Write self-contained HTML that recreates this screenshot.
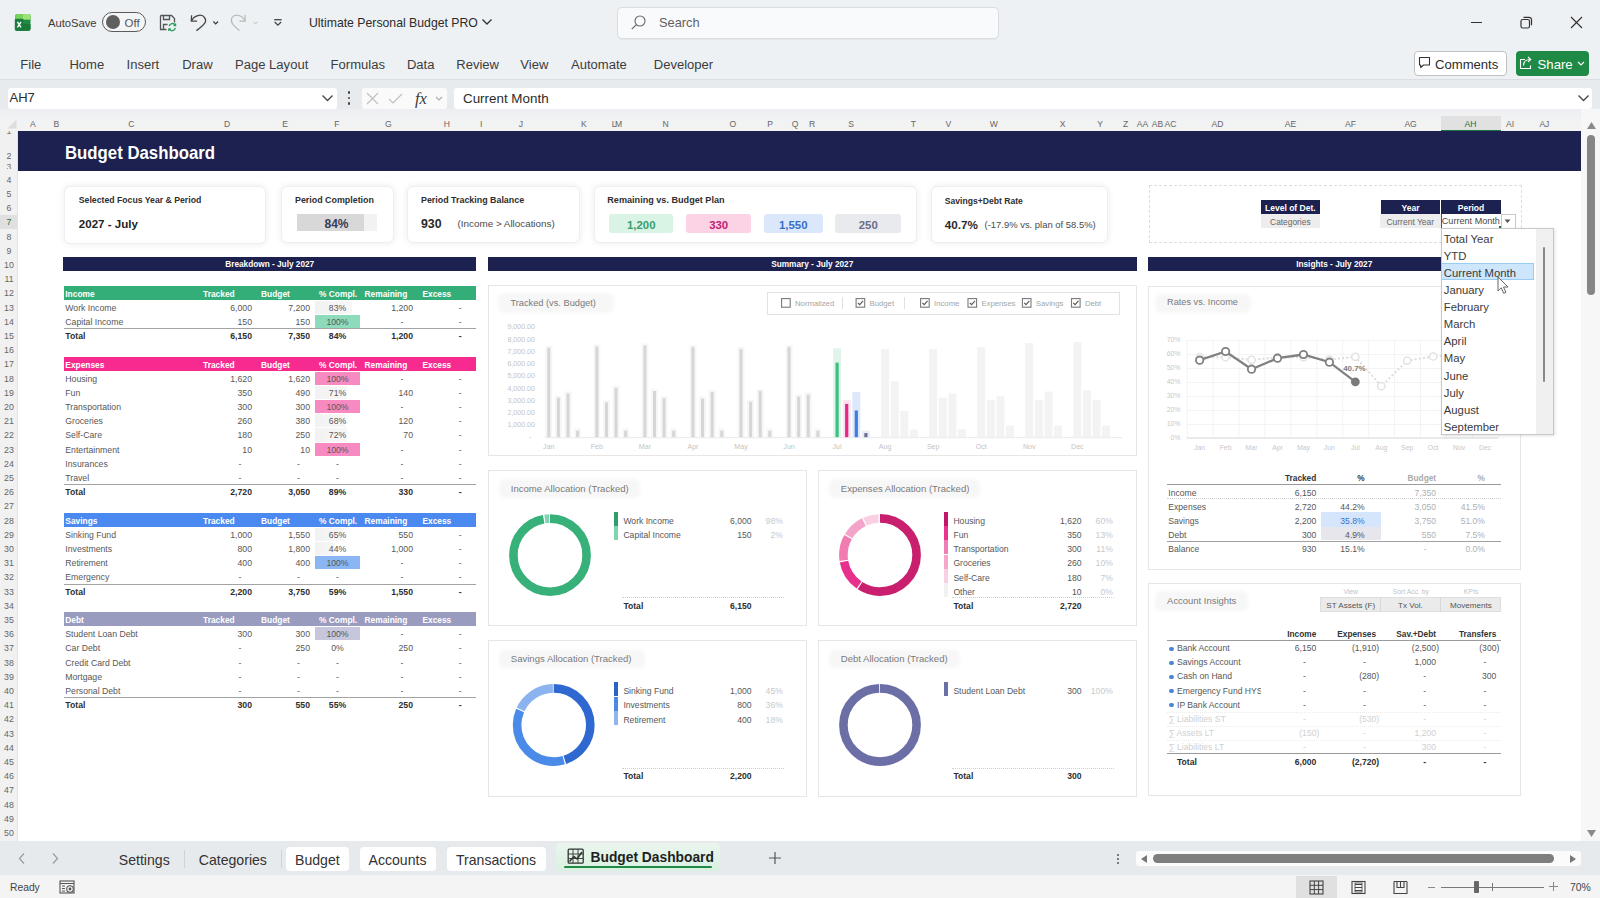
<!DOCTYPE html><html><head><meta charset="utf-8"><style>
html,body{margin:0;padding:0;}
body{width:1600px;height:898px;overflow:hidden;position:relative;background:#eef1f4;font-family:"Liberation Sans",sans-serif;}
.t{position:absolute;white-space:nowrap;}
.r{position:absolute;}
svg{position:absolute;overflow:visible;}
</style></head><body>
<div class="r" style="left:0px;top:0px;width:1600px;height:79px;background:#eef1f4;"></div>
<svg style="left:0;top:0" width="40" height="40" viewBox="0 0 40 40">
<rect x="15.3" y="14" width="15.2" height="16.8" rx="1.8" fill="#1f8a42"/>
<path d="M17.1 14h11.6a1.8 1.8 0 0 1 1.8 1.8v3.6H15.3v-3.6a1.8 1.8 0 0 1 1.8-1.8z" fill="#78d35c"/>
<rect x="23" y="14" width="7.5" height="5.4" rx="1.2" fill="#9de27a"/>
<path d="M15.3 24h15.2v5a1.8 1.8 0 0 1-1.8 1.8H17.1a1.8 1.8 0 0 1-1.8-1.8z" fill="#1a7a3a"/>
<rect x="14.8" y="18.8" width="8.6" height="11.6" rx="1" fill="#197c3d"/>
<path d="M17.4 21.9l3.6 5.4M21 21.9l-3.6 5.4" stroke="#fff" stroke-width="1.4"/>
</svg>
<div class="t" style="left:48px;top:15.82px;font-size:11.2px;line-height:14.56px;color:#3b3b3b;font-weight:normal;">AutoSave</div>
<div class="r" style="left:102px;top:12px;width:41.5px;height:18px;border:1.5px solid #5c5c5c;border-radius:11px;background:#f4f5f7"></div>
<div class="r" style="left:105.5px;top:14.8px;width:14px;height:14px;border-radius:50%;background:#5f5f5f"></div>
<div class="t" style="left:124.5px;top:15.63px;font-size:11.5px;line-height:14.95px;color:#555;font-weight:normal;">Off</div>
<svg style="left:159px;top:14px" width="18" height="18" viewBox="0 0 18 18" fill="none">
<path d="M1.5 1.5h11l3 3v4" stroke="#555" stroke-width="1.3"/>
<path d="M1.5 1.5v14h6" stroke="#555" stroke-width="1.3"/>
<path d="M4.5 1.5v4h6v-4" stroke="#555" stroke-width="1.3"/>
<path d="M4.5 15.5v-5h4" stroke="#555" stroke-width="1.3"/>
<path d="M10.2 12.2a3.3 3.3 0 0 1 6-1.2M16.3 14a3.3 3.3 0 0 1-6 1.2" stroke="#2e9e5b" stroke-width="1.4"/>
<path d="M16.6 9.5v2h-2M9.8 17v-2h2" stroke="#2e9e5b" stroke-width="1.3"/>
</svg>
<svg style="left:0;top:0" width="300" height="40" viewBox="0 0 300 40" fill="none">
<path d="M191.6 15.2L191.3 21.2h5.8" stroke="#454545" stroke-width="1.3" stroke-linejoin="round"/>
<path d="M191.5 21C194 15.5 201.5 13 204.8 17.8C207.2 21.5 204.5 25 196.4 30.6" stroke="#454545" stroke-width="1.3"/>
<path d="M213.4 21.5l2.3 2.3 2.3-2.3" stroke="#333" stroke-width="1.2"/>
<path d="M245 14.8L245.1 21.2h-5.6" stroke="#b8b8b8" stroke-width="1.2" stroke-linejoin="round"/>
<path d="M245 21C242.5 15.5 235 13 232 17.8C229.8 21.5 232.5 25 239.6 30.6" stroke="#b8b8b8" stroke-width="1.2"/>
<path d="M253.5 21.8l2 2 2-2" stroke="#c8c8c8" stroke-width="1.1"/>
</svg>
<svg style="left:0;top:0" width="300" height="40" viewBox="0 0 300 40" fill="none">
<path d="M274.2 19.7h7.5" stroke="#444" stroke-width="1.3"/>
<path d="M274.7 22l3.2 3.2 3.2-3.2" stroke="#444" stroke-width="1.3"/>
</svg>
<div class="t" style="left:309px;top:15.64px;font-size:12.25px;line-height:15.93px;color:#2b2b2b;font-weight:normal;">Ultimate Personal Budget PRO</div>
<svg style="left:481px;top:18px" width="12" height="8" viewBox="0 0 12 8" fill="none"><path d="M1.5 1.5l4.5 4.5 4.5-4.5" stroke="#333" stroke-width="1.4"/></svg>
<div class="r" style="left:617px;top:7px;width:380px;height:30px;border:1px solid #d9dce0;border-radius:5px;background:#f9fafb;box-shadow:0 1px 1px rgba(0,0,0,0.04)"></div>
<svg style="left:630px;top:14px" width="17" height="17" viewBox="0 0 17 17" fill="none">
<circle cx="10" cy="7" r="5" stroke="#666" stroke-width="1.1"/>
<path d="M6.4 10.6l-4.6 4.6" stroke="#666" stroke-width="1.2"/>
</svg>
<div class="t" style="left:659px;top:14.78px;font-size:12.8px;line-height:16.64px;color:#616161;font-weight:normal;">Search</div>
<div class="r" style="left:1471px;top:21.5px;width:10.5px;height:1.2px;background:#333;"></div>
<svg style="left:1519px;top:15px" width="15" height="15" viewBox="0 0 15 15" fill="none">
<rect x="2" y="4.5" width="8.5" height="8.5" rx="1.8" stroke="#333" stroke-width="1.2"/>
<path d="M4.5 2.3h5.7a2.3 2.3 0 0 1 2.3 2.3v5.7" stroke="#333" stroke-width="1.2"/>
</svg>
<svg style="left:1570px;top:16px" width="13" height="13" viewBox="0 0 13 13" fill="none">
<path d="M1 1l11 11M12 1L1 12" stroke="#333" stroke-width="1.2"/>
</svg>
<div class="t" style="left:20.3px;top:56.62px;font-size:13.05px;line-height:16.96px;color:#3c3c3c;font-weight:normal;">File</div>
<div class="t" style="left:69.4px;top:56.62px;font-size:13.05px;line-height:16.96px;color:#3c3c3c;font-weight:normal;">Home</div>
<div class="t" style="left:126.6px;top:56.62px;font-size:13.05px;line-height:16.96px;color:#3c3c3c;font-weight:normal;">Insert</div>
<div class="t" style="left:182.2px;top:56.62px;font-size:13.05px;line-height:16.96px;color:#3c3c3c;font-weight:normal;">Draw</div>
<div class="t" style="left:235px;top:56.62px;font-size:13.05px;line-height:16.96px;color:#3c3c3c;font-weight:normal;">Page Layout</div>
<div class="t" style="left:330.6px;top:56.62px;font-size:13.05px;line-height:16.96px;color:#3c3c3c;font-weight:normal;">Formulas</div>
<div class="t" style="left:406.9px;top:56.62px;font-size:13.05px;line-height:16.96px;color:#3c3c3c;font-weight:normal;">Data</div>
<div class="t" style="left:456.25px;top:56.62px;font-size:13.05px;line-height:16.96px;color:#3c3c3c;font-weight:normal;">Review</div>
<div class="t" style="left:520.3px;top:56.62px;font-size:13.05px;line-height:16.96px;color:#3c3c3c;font-weight:normal;">View</div>
<div class="t" style="left:571px;top:56.62px;font-size:13.05px;line-height:16.96px;color:#3c3c3c;font-weight:normal;">Automate</div>
<div class="t" style="left:653.75px;top:56.62px;font-size:13.05px;line-height:16.96px;color:#3c3c3c;font-weight:normal;">Developer</div>
<div class="r" style="left:1414px;top:51px;width:90.5px;height:22.5px;border:1px solid #c2c2c2;border-radius:4px;background:#fff"></div>
<svg style="left:1418px;top:56px" width="13" height="13" viewBox="0 0 13 13" fill="none">
<path d="M1.5 1.5h10v7.5h-6l-2.8 2.6v-2.6H1.5z" stroke="#333" stroke-width="1.1" stroke-linejoin="round"/>
</svg>
<div class="t" style="left:1435px;top:55.58px;font-size:13.1px;line-height:17.03px;color:#2b2b2b;font-weight:normal;">Comments</div>
<div class="r" style="left:1515.5px;top:51px;width:73.5px;height:24.5px;border-radius:4px;background:#1e8a46"></div>
<svg style="left:1519px;top:55px" width="14" height="15" viewBox="0 0 14 15" fill="none">
<path d="M6 4.5H1.5v9h10v-3" stroke="#fff" stroke-width="1.1"/>
<path d="M4.5 10.5c0-4 3-6 7-6M9 2l2.7 2.5L9 7" stroke="#fff" stroke-width="1.1"/>
</svg>
<div class="t" style="left:1537.5px;top:55.52px;font-size:13.2px;line-height:17.16px;color:#fff;font-weight:normal;">Share</div>
<svg style="left:1577px;top:61px" width="8" height="5" viewBox="0 0 8 5" fill="none"><path d="M1 1l3 3 3-3" stroke="#fff" stroke-width="1.2"/></svg>
<div class="r" style="left:0px;top:78.5px;width:1600px;height:1.2px;background:#dadde1;"></div>
<div class="r" style="left:0px;top:79.7px;width:1600px;height:29.3px;background:#e8ebee;"></div>
<div class="r" style="left:7.5px;top:88px;width:329.5px;height:20.6px;border-radius:3px;background:#fff"></div>
<div class="t" style="left:9.5px;top:90.45px;font-size:13px;line-height:16.9px;color:#2b2b2b;font-weight:normal;">AH7</div>
<svg style="left:321px;top:94px" width="13" height="8" viewBox="0 0 13 8" fill="none"><path d="M1.5 1.5l5 5 5-5" stroke="#444" stroke-width="1.3"/></svg>
<div class="r" style="left:347.8px;top:91.2px;width:2.6px;height:2.6px;border-radius:50%;background:#444"></div>
<div class="r" style="left:347.8px;top:96.7px;width:2.6px;height:2.6px;border-radius:50%;background:#444"></div>
<div class="r" style="left:347.8px;top:102.2px;width:2.6px;height:2.6px;border-radius:50%;background:#444"></div>
<div class="r" style="left:362px;top:88px;width:85px;height:20.6px;border-radius:3px;background:#fafafa"></div>
<svg style="left:365px;top:91px" width="82" height="15" viewBox="0 0 82 15" fill="none">
<path d="M2 2l11 11M13 2L2 13" stroke="#c0c0c0" stroke-width="1.2"/>
<path d="M24 8l4 4 9-9" stroke="#c0c0c0" stroke-width="1.2"/>
<path d="M71 6l3 3 3-3" stroke="#aaa" stroke-width="1.1"/>
</svg>
<div class="t" style="left:415px;top:88.38px;font-size:16.5px;line-height:21.45px;color:#3a3a3a;font-weight:normal;font-family:'Liberation Serif',serif;"><i>fx</i></div>
<div class="r" style="left:454px;top:88px;width:1138px;height:20.6px;border-radius:3px;background:#fff"></div>
<div class="t" style="left:463px;top:90.19px;font-size:13.4px;line-height:17.42px;color:#2b2b2b;font-weight:normal;">Current Month</div>
<svg style="left:1577px;top:94px" width="13" height="8" viewBox="0 0 13 8" fill="none"><path d="M1.5 1.5l5 5 5-5" stroke="#444" stroke-width="1.3"/></svg>
<div class="r" style="left:0px;top:109px;width:1600px;height:22px;background:linear-gradient(#eceef1 0%,#f1f2f3 35%,#f3f3f3 100%);"></div>
<div class="t" style="left:-267.2px;width:600px;text-align:center;top:119.21px;font-size:8.6px;line-height:11.18px;color:#666;font-weight:normal;">A</div>
<div class="t" style="left:-243.75px;width:600px;text-align:center;top:119.21px;font-size:8.6px;line-height:11.18px;color:#666;font-weight:normal;">B</div>
<div class="t" style="left:-168.75px;width:600px;text-align:center;top:119.21px;font-size:8.6px;line-height:11.18px;color:#666;font-weight:normal;">C</div>
<div class="t" style="left:-72.8px;width:600px;text-align:center;top:119.21px;font-size:8.6px;line-height:11.18px;color:#666;font-weight:normal;">D</div>
<div class="t" style="left:-15px;width:600px;text-align:center;top:119.21px;font-size:8.6px;line-height:11.18px;color:#666;font-weight:normal;">E</div>
<div class="t" style="left:36.9px;width:600px;text-align:center;top:119.21px;font-size:8.6px;line-height:11.18px;color:#666;font-weight:normal;">F</div>
<div class="t" style="left:88.4px;width:600px;text-align:center;top:119.21px;font-size:8.6px;line-height:11.18px;color:#666;font-weight:normal;">G</div>
<div class="t" style="left:146.9px;width:600px;text-align:center;top:119.21px;font-size:8.6px;line-height:11.18px;color:#666;font-weight:normal;">H</div>
<div class="t" style="left:181.25px;width:600px;text-align:center;top:119.21px;font-size:8.6px;line-height:11.18px;color:#666;font-weight:normal;">I</div>
<div class="t" style="left:221px;width:600px;text-align:center;top:119.21px;font-size:8.6px;line-height:11.18px;color:#666;font-weight:normal;">J</div>
<div class="t" style="left:283.75px;width:600px;text-align:center;top:119.21px;font-size:8.6px;line-height:11.18px;color:#666;font-weight:normal;">K</div>
<div class="t" style="left:317px;width:600px;text-align:center;top:119.21px;font-size:8.6px;line-height:11.18px;color:#666;font-weight:normal;">L<span style="margin-left:-1.5px">M</span></div>
<div class="t" style="left:365.6px;width:600px;text-align:center;top:119.21px;font-size:8.6px;line-height:11.18px;color:#666;font-weight:normal;">N</div>
<div class="t" style="left:432.8px;width:600px;text-align:center;top:119.21px;font-size:8.6px;line-height:11.18px;color:#666;font-weight:normal;">O</div>
<div class="t" style="left:470px;width:600px;text-align:center;top:119.21px;font-size:8.6px;line-height:11.18px;color:#666;font-weight:normal;">P</div>
<div class="t" style="left:495px;width:600px;text-align:center;top:119.21px;font-size:8.6px;line-height:11.18px;color:#666;font-weight:normal;">Q</div>
<div class="t" style="left:512px;width:600px;text-align:center;top:119.21px;font-size:8.6px;line-height:11.18px;color:#666;font-weight:normal;">R</div>
<div class="t" style="left:551px;width:600px;text-align:center;top:119.21px;font-size:8.6px;line-height:11.18px;color:#666;font-weight:normal;">S</div>
<div class="t" style="left:613.4px;width:600px;text-align:center;top:119.21px;font-size:8.6px;line-height:11.18px;color:#666;font-weight:normal;">T</div>
<div class="t" style="left:648.4px;width:600px;text-align:center;top:119.21px;font-size:8.6px;line-height:11.18px;color:#666;font-weight:normal;">V</div>
<div class="t" style="left:693.75px;width:600px;text-align:center;top:119.21px;font-size:8.6px;line-height:11.18px;color:#666;font-weight:normal;">W</div>
<div class="t" style="left:762.6px;width:600px;text-align:center;top:119.21px;font-size:8.6px;line-height:11.18px;color:#666;font-weight:normal;">X</div>
<div class="t" style="left:800px;width:600px;text-align:center;top:119.21px;font-size:8.6px;line-height:11.18px;color:#666;font-weight:normal;">Y</div>
<div class="t" style="left:825.6px;width:600px;text-align:center;top:119.21px;font-size:8.6px;line-height:11.18px;color:#666;font-weight:normal;">Z</div>
<div class="t" style="left:842.5px;width:600px;text-align:center;top:119.21px;font-size:8.6px;line-height:11.18px;color:#666;font-weight:normal;">AA</div>
<div class="t" style="left:857.5px;width:600px;text-align:center;top:119.21px;font-size:8.6px;line-height:11.18px;color:#666;font-weight:normal;">AB</div>
<div class="t" style="left:870.6px;width:600px;text-align:center;top:119.21px;font-size:8.6px;line-height:11.18px;color:#666;font-weight:normal;">AC</div>
<div class="t" style="left:917.5px;width:600px;text-align:center;top:119.21px;font-size:8.6px;line-height:11.18px;color:#666;font-weight:normal;">AD</div>
<div class="t" style="left:990.6px;width:600px;text-align:center;top:119.21px;font-size:8.6px;line-height:11.18px;color:#666;font-weight:normal;">AE</div>
<div class="t" style="left:1050.6px;width:600px;text-align:center;top:119.21px;font-size:8.6px;line-height:11.18px;color:#666;font-weight:normal;">AF</div>
<div class="t" style="left:1110.6px;width:600px;text-align:center;top:119.21px;font-size:8.6px;line-height:11.18px;color:#666;font-weight:normal;">AG</div>
<div class="t" style="left:1210px;width:600px;text-align:center;top:119.21px;font-size:8.6px;line-height:11.18px;color:#666;font-weight:normal;">AI</div>
<div class="t" style="left:1244.4px;width:600px;text-align:center;top:119.21px;font-size:8.6px;line-height:11.18px;color:#666;font-weight:normal;">AJ</div>
<div class="r" style="left:1440.5px;top:116px;width:60.5px;height:15px;background:#e1e1e1;"></div>
<div class="r" style="left:1440.5px;top:129.5px;width:60.5px;height:1.5px;background:#1e7145;"></div>
<div class="t" style="left:1170.6px;width:600px;text-align:center;top:119.21px;font-size:8.6px;line-height:11.18px;color:#1e7145;font-weight:normal;">AH</div>
<svg style="left:7px;top:119px" width="10" height="10" viewBox="0 0 10 10"><path d="M9.5 0.5v9H0.5z" fill="#dedede"/></svg>
<div class="r" style="left:0px;top:131px;width:18.3px;height:711px;background:#f1f1f1;"></div>
<div class="r" style="left:0px;top:214.6px;width:18.3px;height:14.2px;background:#e0e0e0;"></div>
<div class="r" style="left:16.8px;top:214.6px;width:1.5px;height:14.2px;background:#1e7145;"></div>
<div class="r" style="left:0;top:131px;width:18.3px;height:4.5px;overflow:hidden"><div class="t" style="left:0;width:18px;text-align:center;top:-5.3px;font-size:8.8px;line-height:11.44px;color:#777">1</div></div>
<div class="t" style="left:-291px;width:600px;text-align:center;top:150.88px;font-size:8.8px;line-height:11.44px;color:#666;font-weight:normal;">2</div>
<div class="r" style="left:0;top:164px;width:18.3px;height:5px;overflow:hidden"><div class="t" style="left:0;width:18px;text-align:center;top:-2.5px;font-size:8.8px;line-height:11.44px;color:#777">3</div></div>
<div class="t" style="left:-291px;width:600px;text-align:center;top:174.78px;font-size:8.8px;line-height:11.44px;color:#666;font-weight:normal;">4</div>
<div class="t" style="left:-291px;width:600px;text-align:center;top:188.98px;font-size:8.8px;line-height:11.44px;color:#666;font-weight:normal;">5</div>
<div class="t" style="left:-291px;width:600px;text-align:center;top:203.18px;font-size:8.8px;line-height:11.44px;color:#666;font-weight:normal;">6</div>
<div class="t" style="left:-291px;width:600px;text-align:center;top:217.38px;font-size:8.8px;line-height:11.44px;color:#1e7145;font-weight:normal;">7</div>
<div class="t" style="left:-291px;width:600px;text-align:center;top:231.58px;font-size:8.8px;line-height:11.44px;color:#666;font-weight:normal;">8</div>
<div class="t" style="left:-291px;width:600px;text-align:center;top:245.78px;font-size:8.8px;line-height:11.44px;color:#666;font-weight:normal;">9</div>
<div class="t" style="left:-291px;width:600px;text-align:center;top:259.98px;font-size:8.8px;line-height:11.44px;color:#666;font-weight:normal;">10</div>
<div class="t" style="left:-291px;width:600px;text-align:center;top:274.18px;font-size:8.8px;line-height:11.44px;color:#666;font-weight:normal;">11</div>
<div class="t" style="left:-291px;width:600px;text-align:center;top:288.38px;font-size:8.8px;line-height:11.44px;color:#666;font-weight:normal;">12</div>
<div class="t" style="left:-291px;width:600px;text-align:center;top:302.58px;font-size:8.8px;line-height:11.44px;color:#666;font-weight:normal;">13</div>
<div class="t" style="left:-291px;width:600px;text-align:center;top:316.78px;font-size:8.8px;line-height:11.44px;color:#666;font-weight:normal;">14</div>
<div class="t" style="left:-291px;width:600px;text-align:center;top:330.98px;font-size:8.8px;line-height:11.44px;color:#666;font-weight:normal;">15</div>
<div class="t" style="left:-291px;width:600px;text-align:center;top:345.18px;font-size:8.8px;line-height:11.44px;color:#666;font-weight:normal;">16</div>
<div class="t" style="left:-291px;width:600px;text-align:center;top:359.38px;font-size:8.8px;line-height:11.44px;color:#666;font-weight:normal;">17</div>
<div class="t" style="left:-291px;width:600px;text-align:center;top:373.58px;font-size:8.8px;line-height:11.44px;color:#666;font-weight:normal;">18</div>
<div class="t" style="left:-291px;width:600px;text-align:center;top:387.78px;font-size:8.8px;line-height:11.44px;color:#666;font-weight:normal;">19</div>
<div class="t" style="left:-291px;width:600px;text-align:center;top:401.98px;font-size:8.8px;line-height:11.44px;color:#666;font-weight:normal;">20</div>
<div class="t" style="left:-291px;width:600px;text-align:center;top:416.18px;font-size:8.8px;line-height:11.44px;color:#666;font-weight:normal;">21</div>
<div class="t" style="left:-291px;width:600px;text-align:center;top:430.38px;font-size:8.8px;line-height:11.44px;color:#666;font-weight:normal;">22</div>
<div class="t" style="left:-291px;width:600px;text-align:center;top:444.58px;font-size:8.8px;line-height:11.44px;color:#666;font-weight:normal;">23</div>
<div class="t" style="left:-291px;width:600px;text-align:center;top:458.78px;font-size:8.8px;line-height:11.44px;color:#666;font-weight:normal;">24</div>
<div class="t" style="left:-291px;width:600px;text-align:center;top:472.98px;font-size:8.8px;line-height:11.44px;color:#666;font-weight:normal;">25</div>
<div class="t" style="left:-291px;width:600px;text-align:center;top:487.18px;font-size:8.8px;line-height:11.44px;color:#666;font-weight:normal;">26</div>
<div class="t" style="left:-291px;width:600px;text-align:center;top:501.38px;font-size:8.8px;line-height:11.44px;color:#666;font-weight:normal;">27</div>
<div class="t" style="left:-291px;width:600px;text-align:center;top:515.58px;font-size:8.8px;line-height:11.44px;color:#666;font-weight:normal;">28</div>
<div class="t" style="left:-291px;width:600px;text-align:center;top:529.78px;font-size:8.8px;line-height:11.44px;color:#666;font-weight:normal;">29</div>
<div class="t" style="left:-291px;width:600px;text-align:center;top:543.98px;font-size:8.8px;line-height:11.44px;color:#666;font-weight:normal;">30</div>
<div class="t" style="left:-291px;width:600px;text-align:center;top:558.18px;font-size:8.8px;line-height:11.44px;color:#666;font-weight:normal;">31</div>
<div class="t" style="left:-291px;width:600px;text-align:center;top:572.38px;font-size:8.8px;line-height:11.44px;color:#666;font-weight:normal;">32</div>
<div class="t" style="left:-291px;width:600px;text-align:center;top:586.58px;font-size:8.8px;line-height:11.44px;color:#666;font-weight:normal;">33</div>
<div class="t" style="left:-291px;width:600px;text-align:center;top:600.78px;font-size:8.8px;line-height:11.44px;color:#666;font-weight:normal;">34</div>
<div class="t" style="left:-291px;width:600px;text-align:center;top:614.98px;font-size:8.8px;line-height:11.44px;color:#666;font-weight:normal;">35</div>
<div class="t" style="left:-291px;width:600px;text-align:center;top:629.18px;font-size:8.8px;line-height:11.44px;color:#666;font-weight:normal;">36</div>
<div class="t" style="left:-291px;width:600px;text-align:center;top:643.38px;font-size:8.8px;line-height:11.44px;color:#666;font-weight:normal;">37</div>
<div class="t" style="left:-291px;width:600px;text-align:center;top:657.58px;font-size:8.8px;line-height:11.44px;color:#666;font-weight:normal;">38</div>
<div class="t" style="left:-291px;width:600px;text-align:center;top:671.78px;font-size:8.8px;line-height:11.44px;color:#666;font-weight:normal;">39</div>
<div class="t" style="left:-291px;width:600px;text-align:center;top:685.98px;font-size:8.8px;line-height:11.44px;color:#666;font-weight:normal;">40</div>
<div class="t" style="left:-291px;width:600px;text-align:center;top:700.18px;font-size:8.8px;line-height:11.44px;color:#666;font-weight:normal;">41</div>
<div class="t" style="left:-291px;width:600px;text-align:center;top:714.38px;font-size:8.8px;line-height:11.44px;color:#666;font-weight:normal;">42</div>
<div class="t" style="left:-291px;width:600px;text-align:center;top:728.58px;font-size:8.8px;line-height:11.44px;color:#666;font-weight:normal;">43</div>
<div class="t" style="left:-291px;width:600px;text-align:center;top:742.78px;font-size:8.8px;line-height:11.44px;color:#666;font-weight:normal;">44</div>
<div class="t" style="left:-291px;width:600px;text-align:center;top:756.98px;font-size:8.8px;line-height:11.44px;color:#666;font-weight:normal;">45</div>
<div class="t" style="left:-291px;width:600px;text-align:center;top:771.18px;font-size:8.8px;line-height:11.44px;color:#666;font-weight:normal;">46</div>
<div class="t" style="left:-291px;width:600px;text-align:center;top:785.38px;font-size:8.8px;line-height:11.44px;color:#666;font-weight:normal;">47</div>
<div class="t" style="left:-291px;width:600px;text-align:center;top:799.58px;font-size:8.8px;line-height:11.44px;color:#666;font-weight:normal;">48</div>
<div class="t" style="left:-291px;width:600px;text-align:center;top:813.78px;font-size:8.8px;line-height:11.44px;color:#666;font-weight:normal;">49</div>
<div class="t" style="left:-291px;width:600px;text-align:center;top:827.98px;font-size:8.8px;line-height:11.44px;color:#666;font-weight:normal;">50</div>
<div class="r" style="left:18.3px;top:131px;width:1562.7px;height:710px;background:#ffffff;"></div>
<div class="r" style="left:17.3px;top:131px;width:1.0px;height:710px;background:#e3e3e3;"></div>
<div class="r" style="left:1581px;top:109px;width:19px;height:733px;background:#f7f7f7;"></div>
<svg style="left:1586px;top:121px" width="11" height="9" viewBox="0 0 11 9"><path d="M5.5 1l4.5 7H1z" fill="#8a8a8a"/></svg>
<div class="r" style="left:1587.3px;top:135px;width:8px;height:160px;border-radius:4px;background:#868686"></div>
<svg style="left:1586px;top:829px" width="11" height="9" viewBox="0 0 11 9"><path d="M5.5 8L10 1H1z" fill="#8a8a8a"/></svg>
<div class="r" style="left:0px;top:841px;width:1600px;height:34px;background:#e7eaed;"></div>
<svg style="left:17px;top:852px" width="45" height="13" viewBox="0 0 45 13" fill="none">
<path d="M7 1.5L2.5 6.5 7 11.5" stroke="#9a9a9a" stroke-width="1.2"/>
<path d="M36 1.5l4.5 5-4.5 5" stroke="#9a9a9a" stroke-width="1.2"/>
</svg>
<div class="t" style="left:118.75px;top:850.94px;font-size:14.1px;line-height:18.33px;color:#333;font-weight:normal;">Settings</div>
<div class="r" style="left:184px;top:850px;width:1px;height:18px;background:#cfd2d6;"></div>
<div class="t" style="left:198.75px;top:850.94px;font-size:14.1px;line-height:18.33px;color:#333;font-weight:normal;">Categories</div>
<div class="r" style="left:280.5px;top:850px;width:1.0px;height:18px;background:#cfd2d6;"></div>
<div class="r" style="left:286px;top:847px;width:63px;height:24px;border-radius:4px;background:#fff"></div>
<div class="t" style="left:295px;top:850.94px;font-size:14.1px;line-height:18.33px;color:#333;font-weight:normal;">Budget</div>
<div class="r" style="left:359.5px;top:847px;width:76.5px;height:23.5px;border-radius:4px;background:#fff"></div>
<div class="t" style="left:368.5px;top:850.94px;font-size:14.1px;line-height:18.33px;color:#333;font-weight:normal;">Accounts</div>
<div class="r" style="left:446.5px;top:847px;width:99px;height:23.5px;border-radius:4px;background:#fff"></div>
<div class="t" style="left:456px;top:850.94px;font-size:14.1px;line-height:18.33px;color:#333;font-weight:normal;">Transactions</div>
<div class="r" style="left:556px;top:842.5px;width:163.5px;height:28px;border-radius:4px;background:linear-gradient(#eaf5ee,#d9f1e1)"></div>
<svg style="left:567px;top:848px" width="18" height="17" viewBox="0 0 18 17" fill="none">
<rect x="1.2" y="1.2" width="15" height="14" rx="1" stroke="#333" stroke-width="1.3"/>
<path d="M1.2 6h15M1.2 10.5h15M6 1.2v14M11 1.2v14" stroke="#333" stroke-width="0.9"/>
<path d="M2.5 13.5L7 8.5l3 2.5 5-7" stroke="#333" stroke-width="1.5"/>
</svg>
<div class="t" style="left:590.5px;top:848.63px;font-size:13.8px;line-height:17.94px;color:#1f1f1f;font-weight:bold;">Budget Dashboard</div>
<div class="r" style="left:563.5px;top:866px;width:148.5px;height:2.2px;background:#1e8a46;border-radius:1px;"></div>
<svg style="left:768px;top:851px" width="14" height="14" viewBox="0 0 14 14" fill="none"><path d="M7 1v12M1 7h12" stroke="#555" stroke-width="1.2"/></svg>
<div class="r" style="left:1117px;top:853.9px;width:2.2px;height:2.2px;border-radius:50%;background:#555"></div>
<div class="r" style="left:1117px;top:857.9px;width:2.2px;height:2.2px;border-radius:50%;background:#555"></div>
<div class="r" style="left:1117px;top:861.9px;width:2.2px;height:2.2px;border-radius:50%;background:#555"></div>
<div class="r" style="left:1136px;top:850.5px;width:445px;height:15.5px;border-radius:3px;background:#fbfbfb"></div>
<svg style="left:1140px;top:854px" width="440" height="10" viewBox="0 0 440 10">
<path d="M7 1v8L1 5z" fill="#777"/><path d="M430 1v8l6-4z" fill="#777"/></svg>
<div class="r" style="left:1153px;top:854.4px;width:401px;height:8.8px;border-radius:4.4px;background:#7e7e7e"></div>
<div class="r" style="left:0px;top:875px;width:1600px;height:23px;background:#f4f4f4;"></div>
<div class="t" style="left:10px;top:881.4px;font-size:10.3px;line-height:13.39px;color:#444;font-weight:normal;">Ready</div>
<svg style="left:59px;top:880px" width="17" height="15" viewBox="0 0 17 15" fill="none">
<rect x="1" y="1" width="14" height="12" stroke="#555" stroke-width="1.1"/>
<path d="M1 3.5h14M3 6h3M3 8.5h3M3 11h3" stroke="#555" stroke-width="1"/>
<circle cx="11" cy="9" r="3.3" fill="#f3f3f3" stroke="#555" stroke-width="1.1"/><circle cx="11" cy="9" r="1.4" fill="#555"/>
</svg>
<div class="r" style="left:1296px;top:876px;width:41px;height:22px;background:#e0e0e0;"></div>
<svg style="left:1309px;top:880px" width="110" height="15" viewBox="0 0 110 15" fill="none">
<rect x="1" y="1" width="13" height="13" stroke="#444" stroke-width="1.1"/>
<path d="M1 5.3h13M1 9.6h13M5.3 1v13M9.6 1v13" stroke="#444" stroke-width="1"/>
<rect x="43" y="1.5" width="13" height="12" stroke="#444" stroke-width="1.1"/>
<path d="M46 4.5h7M46 7.5h7M46 10.5h7" stroke="#444" stroke-width="1"/>
<rect x="46" y="3" width="7" height="9" stroke="#444" stroke-width="0.8"/>
<path d="M85 1.5v12h13v-12" stroke="#444" stroke-width="1.1"/>
<path d="M85 1.5h13M88 1.5v6h7v-6M91.5 1.5v6" stroke="#444" stroke-width="1.1"/>
</svg>
<div class="r" style="left:1428px;top:886.6px;width:6.5px;height:1.0px;background:#888;"></div>
<div class="r" style="left:1441px;top:886.6px;width:103px;height:1.0px;background:#7a7a7a;"></div>
<div class="r" style="left:1474px;top:881px;width:5px;height:12px;background:#666;border-radius:1px;"></div>
<div class="r" style="left:1491.5px;top:883px;width:1.0px;height:8px;background:#777;"></div>
<svg style="left:1548px;top:881px" width="11" height="11" viewBox="0 0 11 11" fill="none"><path d="M5.5 1v9M1 5.5h9" stroke="#888" stroke-width="1"/></svg>
<div class="t" style="left:1570px;top:881.34px;font-size:10.4px;line-height:13.52px;color:#444;font-weight:normal;">70%</div>
<div class="r" style="left:18.3px;top:131px;width:1562.7px;height:40.2px;background:#1c2150;"></div>
<div class="t" style="left:64.7px;top:141.11px;font-size:18.6px;line-height:24.18px;color:#fff;font-weight:bold;transform:scaleX(0.902);transform-origin:0 50%;">Budget Dashboard</div>
<div class="r" style="left:64px;top:186px;width:200px;height:55.5px;border:1px solid #efefef;border-radius:6px;background:#fff;box-shadow:0 0 6px 1px rgba(0,0,0,0.06)"></div>
<div class="t" style="left:78.8px;top:194.94px;font-size:8.7px;line-height:11.31px;color:#2e2e2e;font-weight:bold;">Selected Focus Year &amp; Period</div>
<div class="t" style="left:78.8px;top:217.09px;font-size:11.55px;line-height:15.02px;color:#222;font-weight:bold;">2027 - July</div>
<div class="r" style="left:281px;top:186px;width:110.5px;height:55px;border:1px solid #efefef;border-radius:6px;background:#fff;box-shadow:0 0 6px 1px rgba(0,0,0,0.06)"></div>
<div class="t" style="left:295px;top:194.81px;font-size:8.9px;line-height:11.57px;color:#2e2e2e;font-weight:bold;">Period Completion</div>
<div class="r" style="left:297px;top:214.3px;width:80px;height:17.0px;background:#f2f2f2;"></div>
<div class="r" style="left:297px;top:214.3px;width:67px;height:17.0px;background:#d8d8d8;"></div>
<div class="t" style="left:36.5px;width:600px;text-align:center;top:216.6px;font-size:12px;line-height:15.6px;color:#363b58;font-weight:bold;">84%</div>
<div class="r" style="left:406.6px;top:186px;width:171.2px;height:55px;border:1px solid #efefef;border-radius:6px;background:#fff;box-shadow:0 0 6px 1px rgba(0,0,0,0.06)"></div>
<div class="t" style="left:421px;top:194.81px;font-size:8.9px;line-height:11.57px;color:#2e2e2e;font-weight:bold;">Period Tracking Balance</div>
<div class="t" style="left:421px;top:216.27px;font-size:12.35px;line-height:16.05px;color:#2a2a2a;font-weight:bold;">930</div>
<div class="t" style="left:457.6px;top:218.2px;font-size:9.85px;line-height:12.8px;color:#4a4a4a;font-weight:normal;">(Income &gt; Allocations)</div>
<div class="r" style="left:593.5px;top:186px;width:321.0px;height:54.7px;border:1px solid #efefef;border-radius:6px;background:#fff;box-shadow:0 0 6px 1px rgba(0,0,0,0.06)"></div>
<div class="t" style="left:607.3px;top:194.88px;font-size:9.1px;line-height:11.83px;color:#2e2e2e;font-weight:bold;">Remaining vs. Budget Plan</div>
<div class="r" style="left:609.4px;top:213.6px;width:63.8px;height:19.4px;background:#d9f3e4;border-radius:3px;"></div>
<div class="t" style="left:341.3px;width:600px;text-align:center;top:217.59px;font-size:11.4px;line-height:14.82px;color:#3a9e6e;font-weight:bold;">1,200</div>
<div class="r" style="left:686px;top:213.6px;width:65.4px;height:19.4px;background:#fbd3e5;border-radius:3px;"></div>
<div class="t" style="left:418.7px;width:600px;text-align:center;top:217.59px;font-size:11.4px;line-height:14.82px;color:#bd2274;font-weight:bold;">330</div>
<div class="r" style="left:763.5px;top:213.6px;width:59.5px;height:19.4px;background:#dbe7fb;border-radius:3px;"></div>
<div class="t" style="left:493.25px;width:600px;text-align:center;top:217.59px;font-size:11.4px;line-height:14.82px;color:#3a6fc4;font-weight:bold;">1,550</div>
<div class="r" style="left:835.3px;top:213.6px;width:65.9px;height:19.4px;background:#e8eaee;border-radius:3px;"></div>
<div class="t" style="left:568.25px;width:600px;text-align:center;top:217.59px;font-size:11.4px;line-height:14.82px;color:#6a6d86;font-weight:bold;">250</div>
<div class="r" style="left:930.8px;top:186px;width:175.0px;height:55px;border:1px solid #efefef;border-radius:6px;background:#fff;box-shadow:0 0 6px 1px rgba(0,0,0,0.06)"></div>
<div class="t" style="left:944.75px;top:195.61px;font-size:8.6px;line-height:11.18px;color:#2e2e2e;font-weight:bold;">Savings+Debt Rate</div>
<div class="t" style="left:944.75px;top:216.8px;font-size:11.7px;line-height:15.21px;color:#2a2a2a;font-weight:bold;">40.7%</div>
<div class="t" style="left:984.5px;top:218.65px;font-size:9.45px;line-height:12.29px;color:#4a4a4a;font-weight:normal;">(-17.9% vs. plan of 58.5%)</div>
<div class="r" style="left:1148.75px;top:185.3px;width:370.75px;height:56px;border:1px dashed #dcdcdc;background:#fff"></div>
<div class="r" style="left:1260.7px;top:200px;width:59.3px;height:13.6px;background:#1c2150;"></div>
<div class="t" style="left:990.35px;width:600px;text-align:center;top:202.88px;font-size:8.5px;line-height:11.05px;color:#fff;font-weight:bold;">Level of Det.</div>
<div class="r" style="left:1260.7px;top:213.6px;width:59.3px;height:14.8px;background:#ededed;"></div>
<div class="t" style="left:990.35px;width:600px;text-align:center;top:217.14px;font-size:8.4px;line-height:10.92px;color:#666;font-weight:normal;">Categories</div>
<div class="r" style="left:1380.8px;top:200px;width:59.5px;height:13.6px;background:#1c2150;"></div>
<div class="r" style="left:1440.9px;top:200px;width:60.1px;height:13.6px;background:#1c2150;"></div>
<div class="t" style="left:1110.5px;width:600px;text-align:center;top:202.88px;font-size:8.5px;line-height:11.05px;color:#fff;font-weight:bold;">Year</div>
<div class="t" style="left:1171px;width:600px;text-align:center;top:202.88px;font-size:8.5px;line-height:11.05px;color:#fff;font-weight:bold;">Period</div>
<div class="r" style="left:1380px;top:213.6px;width:60.5px;height:14.8px;background:#ededed;"></div>
<div class="t" style="left:1110.3px;width:600px;text-align:center;top:217.07px;font-size:8.5px;line-height:11.05px;color:#666;font-weight:normal;">Current Year</div>
<div class="r" style="left:1440.5px;top:213.6px;width:60.5px;height:14.8px;background:#fff;box-sizing:border-box;border-left:1.4px solid #1e7145;"></div>
<div class="r" style="left:1498.5px;top:225.8px;width:3.0px;height:3.0px;background:#1e7145;"></div>
<div class="r" style="left:1441.5px;top:214px;width:59px;height:14px;overflow:hidden"><div class="t" style="left:0.3px;top:1.6px;font-size:9.1px;line-height:11.83px;color:#4a4a4a">Current Month</div></div>
<div class="r" style="left:1501px;top:214px;width:12.5px;height:12.8px;border:1px solid #c9c9c9;background:#fff"></div>
<svg style="left:1504px;top:219px" width="7" height="5" viewBox="0 0 7 5"><path d="M0.5 0.5h6L3.5 4z" fill="#555"/></svg>
<div class="r" style="left:63.4px;top:256.8px;width:412.6px;height:14.4px;background:#1c2150;"></div>
<div class="t" style="left:-30.3px;width:600px;text-align:center;top:259.94px;font-size:8.25px;line-height:10.72px;color:#fff;font-weight:bold;">Breakdown - July 2027</div>
<div class="r" style="left:487.5px;top:256.8px;width:649.5px;height:14.4px;background:#1c2150;"></div>
<div class="t" style="left:512.25px;width:600px;text-align:center;top:259.94px;font-size:8.25px;line-height:10.72px;color:#fff;font-weight:bold;">Summary - July 2027</div>
<div class="r" style="left:1148px;top:256.8px;width:372.5px;height:14.4px;background:#1c2150;"></div>
<div class="t" style="left:1034.25px;width:600px;text-align:center;top:259.94px;font-size:8.25px;line-height:10.72px;color:#fff;font-weight:bold;">Insights - July 2027</div>
<div class="r" style="left:63.5px;top:285.5px;width:412.5px;height:14.1px;background:#34ae78;"></div>
<div class="t" style="left:65.3px;top:288.64px;font-size:8.4px;line-height:10.92px;color:#fff;font-weight:bold;">Income</div>
<div class="t" style="left:203px;top:288.64px;font-size:8.4px;line-height:10.92px;color:#fff;font-weight:bold;">Tracked</div>
<div class="t" style="left:261px;top:288.64px;font-size:8.4px;line-height:10.92px;color:#fff;font-weight:bold;">Budget</div>
<div class="t" style="left:319px;top:288.64px;font-size:8.4px;line-height:10.92px;color:#fff;font-weight:bold;">% Compl.</div>
<div class="t" style="left:364.5px;top:288.64px;font-size:8.4px;line-height:10.92px;color:#fff;font-weight:bold;">Remaining</div>
<div class="t" style="left:422.4px;top:288.64px;font-size:8.4px;line-height:10.92px;color:#fff;font-weight:bold;">Excess</div>
<div class="r" style="left:315px;top:300.5px;width:37.35px;height:13.3px;background:linear-gradient(90deg,#f2f2f2,#f7f7f7);"></div>
<div class="t" style="left:65.3px;top:302.65px;font-size:8.7px;line-height:11.31px;color:#575757;font-weight:normal;">Work Income</div>
<div class="t" style="right:1348px;text-align:right;top:302.65px;font-size:8.7px;line-height:11.31px;color:#575757;font-weight:normal;">6,000</div>
<div class="t" style="right:1290px;text-align:right;top:302.65px;font-size:8.7px;line-height:11.31px;color:#575757;font-weight:normal;">7,200</div>
<div class="t" style="left:37.5px;width:600px;text-align:center;top:302.65px;font-size:8.7px;line-height:11.31px;color:#575757;font-weight:normal;">83%</div>
<div class="t" style="right:1187px;text-align:right;top:302.65px;font-size:8.7px;line-height:11.31px;color:#575757;font-weight:normal;">1,200</div>
<div class="t" style="left:160.3px;width:600px;text-align:center;top:302.65px;font-size:8.7px;line-height:11.31px;color:#575757;font-weight:normal;">-</div>
<div class="r" style="left:315px;top:314.7px;width:45px;height:13.3px;background:#8edbbb;"></div>
<div class="t" style="left:65.3px;top:316.85px;font-size:8.7px;line-height:11.31px;color:#575757;font-weight:normal;">Capital Income</div>
<div class="t" style="right:1348px;text-align:right;top:316.85px;font-size:8.7px;line-height:11.31px;color:#575757;font-weight:normal;">150</div>
<div class="t" style="right:1290px;text-align:right;top:316.85px;font-size:8.7px;line-height:11.31px;color:#575757;font-weight:normal;">150</div>
<div class="t" style="left:37.5px;width:600px;text-align:center;top:316.85px;font-size:8.7px;line-height:11.31px;color:#575757;font-weight:normal;">100%</div>
<div class="t" style="left:102px;width:600px;text-align:center;top:316.85px;font-size:8.7px;line-height:11.31px;color:#575757;font-weight:normal;">-</div>
<div class="t" style="left:160.3px;width:600px;text-align:center;top:316.85px;font-size:8.7px;line-height:11.31px;color:#575757;font-weight:normal;">-</div>
<div class="r" style="left:63.5px;top:328.0px;width:412.5px;height:1.2px;background:#a3a3a3;"></div>
<div class="t" style="left:65.3px;top:331.05px;font-size:8.7px;line-height:11.31px;color:#2e2e2e;font-weight:bold;">Total</div>
<div class="t" style="right:1348px;text-align:right;top:331.05px;font-size:8.7px;line-height:11.31px;color:#2e2e2e;font-weight:bold;">6,150</div>
<div class="t" style="right:1290px;text-align:right;top:331.05px;font-size:8.7px;line-height:11.31px;color:#2e2e2e;font-weight:bold;">7,350</div>
<div class="t" style="left:37.5px;width:600px;text-align:center;top:331.05px;font-size:8.7px;line-height:11.31px;color:#2e2e2e;font-weight:bold;">84%</div>
<div class="t" style="right:1187px;text-align:right;top:331.05px;font-size:8.7px;line-height:11.31px;color:#2e2e2e;font-weight:bold;">1,200</div>
<div class="t" style="left:160.3px;width:600px;text-align:center;top:331.05px;font-size:8.7px;line-height:11.31px;color:#2e2e2e;font-weight:bold;">-</div>
<div class="r" style="left:63.5px;top:356.5px;width:412.5px;height:14.1px;background:#f72a90;"></div>
<div class="t" style="left:65.3px;top:359.64px;font-size:8.4px;line-height:10.92px;color:#fff;font-weight:bold;">Expenses</div>
<div class="t" style="left:203px;top:359.64px;font-size:8.4px;line-height:10.92px;color:#fff;font-weight:bold;">Tracked</div>
<div class="t" style="left:261px;top:359.64px;font-size:8.4px;line-height:10.92px;color:#fff;font-weight:bold;">Budget</div>
<div class="t" style="left:319px;top:359.64px;font-size:8.4px;line-height:10.92px;color:#fff;font-weight:bold;">% Compl.</div>
<div class="t" style="left:364.5px;top:359.64px;font-size:8.4px;line-height:10.92px;color:#fff;font-weight:bold;">Remaining</div>
<div class="t" style="left:422.4px;top:359.64px;font-size:8.4px;line-height:10.92px;color:#fff;font-weight:bold;">Excess</div>
<div class="r" style="left:315px;top:371.5px;width:45px;height:13.3px;background:#f78bc1;"></div>
<div class="t" style="left:65.3px;top:373.65px;font-size:8.7px;line-height:11.31px;color:#575757;font-weight:normal;">Housing</div>
<div class="t" style="right:1348px;text-align:right;top:373.65px;font-size:8.7px;line-height:11.31px;color:#575757;font-weight:normal;">1,620</div>
<div class="t" style="right:1290px;text-align:right;top:373.65px;font-size:8.7px;line-height:11.31px;color:#575757;font-weight:normal;">1,620</div>
<div class="t" style="left:37.5px;width:600px;text-align:center;top:373.65px;font-size:8.7px;line-height:11.31px;color:#575757;font-weight:normal;">100%</div>
<div class="t" style="left:102px;width:600px;text-align:center;top:373.65px;font-size:8.7px;line-height:11.31px;color:#575757;font-weight:normal;">-</div>
<div class="t" style="left:160.3px;width:600px;text-align:center;top:373.65px;font-size:8.7px;line-height:11.31px;color:#575757;font-weight:normal;">-</div>
<div class="r" style="left:315px;top:385.7px;width:31.95px;height:13.3px;background:linear-gradient(90deg,#f2f2f2,#f7f7f7);"></div>
<div class="t" style="left:65.3px;top:387.85px;font-size:8.7px;line-height:11.31px;color:#575757;font-weight:normal;">Fun</div>
<div class="t" style="right:1348px;text-align:right;top:387.85px;font-size:8.7px;line-height:11.31px;color:#575757;font-weight:normal;">350</div>
<div class="t" style="right:1290px;text-align:right;top:387.85px;font-size:8.7px;line-height:11.31px;color:#575757;font-weight:normal;">490</div>
<div class="t" style="left:37.5px;width:600px;text-align:center;top:387.85px;font-size:8.7px;line-height:11.31px;color:#575757;font-weight:normal;">71%</div>
<div class="t" style="right:1187px;text-align:right;top:387.85px;font-size:8.7px;line-height:11.31px;color:#575757;font-weight:normal;">140</div>
<div class="t" style="left:160.3px;width:600px;text-align:center;top:387.85px;font-size:8.7px;line-height:11.31px;color:#575757;font-weight:normal;">-</div>
<div class="r" style="left:315px;top:399.90000000000003px;width:45px;height:13.3px;background:#f78bc1;"></div>
<div class="t" style="left:65.3px;top:402.05px;font-size:8.7px;line-height:11.31px;color:#575757;font-weight:normal;">Transportation</div>
<div class="t" style="right:1348px;text-align:right;top:402.05px;font-size:8.7px;line-height:11.31px;color:#575757;font-weight:normal;">300</div>
<div class="t" style="right:1290px;text-align:right;top:402.05px;font-size:8.7px;line-height:11.31px;color:#575757;font-weight:normal;">300</div>
<div class="t" style="left:37.5px;width:600px;text-align:center;top:402.05px;font-size:8.7px;line-height:11.31px;color:#575757;font-weight:normal;">100%</div>
<div class="t" style="left:102px;width:600px;text-align:center;top:402.05px;font-size:8.7px;line-height:11.31px;color:#575757;font-weight:normal;">-</div>
<div class="t" style="left:160.3px;width:600px;text-align:center;top:402.05px;font-size:8.7px;line-height:11.31px;color:#575757;font-weight:normal;">-</div>
<div class="r" style="left:315px;top:414.1px;width:30.6px;height:13.3px;background:linear-gradient(90deg,#f2f2f2,#f7f7f7);"></div>
<div class="t" style="left:65.3px;top:416.25px;font-size:8.7px;line-height:11.31px;color:#575757;font-weight:normal;">Groceries</div>
<div class="t" style="right:1348px;text-align:right;top:416.25px;font-size:8.7px;line-height:11.31px;color:#575757;font-weight:normal;">260</div>
<div class="t" style="right:1290px;text-align:right;top:416.25px;font-size:8.7px;line-height:11.31px;color:#575757;font-weight:normal;">380</div>
<div class="t" style="left:37.5px;width:600px;text-align:center;top:416.25px;font-size:8.7px;line-height:11.31px;color:#575757;font-weight:normal;">68%</div>
<div class="t" style="right:1187px;text-align:right;top:416.25px;font-size:8.7px;line-height:11.31px;color:#575757;font-weight:normal;">120</div>
<div class="t" style="left:160.3px;width:600px;text-align:center;top:416.25px;font-size:8.7px;line-height:11.31px;color:#575757;font-weight:normal;">-</div>
<div class="r" style="left:315px;top:428.3px;width:32.4px;height:13.3px;background:linear-gradient(90deg,#f2f2f2,#f7f7f7);"></div>
<div class="t" style="left:65.3px;top:430.45px;font-size:8.7px;line-height:11.31px;color:#575757;font-weight:normal;">Self-Care</div>
<div class="t" style="right:1348px;text-align:right;top:430.45px;font-size:8.7px;line-height:11.31px;color:#575757;font-weight:normal;">180</div>
<div class="t" style="right:1290px;text-align:right;top:430.45px;font-size:8.7px;line-height:11.31px;color:#575757;font-weight:normal;">250</div>
<div class="t" style="left:37.5px;width:600px;text-align:center;top:430.45px;font-size:8.7px;line-height:11.31px;color:#575757;font-weight:normal;">72%</div>
<div class="t" style="right:1187px;text-align:right;top:430.45px;font-size:8.7px;line-height:11.31px;color:#575757;font-weight:normal;">70</div>
<div class="t" style="left:160.3px;width:600px;text-align:center;top:430.45px;font-size:8.7px;line-height:11.31px;color:#575757;font-weight:normal;">-</div>
<div class="r" style="left:315px;top:442.5px;width:45px;height:13.3px;background:#f78bc1;"></div>
<div class="t" style="left:65.3px;top:444.65px;font-size:8.7px;line-height:11.31px;color:#575757;font-weight:normal;">Entertainment</div>
<div class="t" style="right:1348px;text-align:right;top:444.65px;font-size:8.7px;line-height:11.31px;color:#575757;font-weight:normal;">10</div>
<div class="t" style="right:1290px;text-align:right;top:444.65px;font-size:8.7px;line-height:11.31px;color:#575757;font-weight:normal;">10</div>
<div class="t" style="left:37.5px;width:600px;text-align:center;top:444.65px;font-size:8.7px;line-height:11.31px;color:#575757;font-weight:normal;">100%</div>
<div class="t" style="left:102px;width:600px;text-align:center;top:444.65px;font-size:8.7px;line-height:11.31px;color:#575757;font-weight:normal;">-</div>
<div class="t" style="left:160.3px;width:600px;text-align:center;top:444.65px;font-size:8.7px;line-height:11.31px;color:#575757;font-weight:normal;">-</div>
<div class="t" style="left:65.3px;top:458.85px;font-size:8.7px;line-height:11.31px;color:#575757;font-weight:normal;">Insurances</div>
<div class="t" style="left:-60px;width:600px;text-align:center;top:458.85px;font-size:8.7px;line-height:11.31px;color:#575757;font-weight:normal;">-</div>
<div class="t" style="left:-1.5px;width:600px;text-align:center;top:458.85px;font-size:8.7px;line-height:11.31px;color:#575757;font-weight:normal;">-</div>
<div class="t" style="left:37.5px;width:600px;text-align:center;top:458.85px;font-size:8.7px;line-height:11.31px;color:#575757;font-weight:normal;">-</div>
<div class="t" style="left:102px;width:600px;text-align:center;top:458.85px;font-size:8.7px;line-height:11.31px;color:#575757;font-weight:normal;">-</div>
<div class="t" style="left:160.3px;width:600px;text-align:center;top:458.85px;font-size:8.7px;line-height:11.31px;color:#575757;font-weight:normal;">-</div>
<div class="t" style="left:65.3px;top:473.05px;font-size:8.7px;line-height:11.31px;color:#575757;font-weight:normal;">Travel</div>
<div class="t" style="left:-60px;width:600px;text-align:center;top:473.05px;font-size:8.7px;line-height:11.31px;color:#575757;font-weight:normal;">-</div>
<div class="t" style="left:-1.5px;width:600px;text-align:center;top:473.05px;font-size:8.7px;line-height:11.31px;color:#575757;font-weight:normal;">-</div>
<div class="t" style="left:37.5px;width:600px;text-align:center;top:473.05px;font-size:8.7px;line-height:11.31px;color:#575757;font-weight:normal;">-</div>
<div class="t" style="left:102px;width:600px;text-align:center;top:473.05px;font-size:8.7px;line-height:11.31px;color:#575757;font-weight:normal;">-</div>
<div class="t" style="left:160.3px;width:600px;text-align:center;top:473.05px;font-size:8.7px;line-height:11.31px;color:#575757;font-weight:normal;">-</div>
<div class="r" style="left:63.5px;top:484.2px;width:412.5px;height:1.2px;background:#a3a3a3;"></div>
<div class="t" style="left:65.3px;top:487.25px;font-size:8.7px;line-height:11.31px;color:#2e2e2e;font-weight:bold;">Total</div>
<div class="t" style="right:1348px;text-align:right;top:487.25px;font-size:8.7px;line-height:11.31px;color:#2e2e2e;font-weight:bold;">2,720</div>
<div class="t" style="right:1290px;text-align:right;top:487.25px;font-size:8.7px;line-height:11.31px;color:#2e2e2e;font-weight:bold;">3,050</div>
<div class="t" style="left:37.5px;width:600px;text-align:center;top:487.25px;font-size:8.7px;line-height:11.31px;color:#2e2e2e;font-weight:bold;">89%</div>
<div class="t" style="right:1187px;text-align:right;top:487.25px;font-size:8.7px;line-height:11.31px;color:#2e2e2e;font-weight:bold;">330</div>
<div class="t" style="left:160.3px;width:600px;text-align:center;top:487.25px;font-size:8.7px;line-height:11.31px;color:#2e2e2e;font-weight:bold;">-</div>
<div class="r" style="left:63.5px;top:512.7px;width:412.5px;height:14.1px;background:#4a8af0;"></div>
<div class="t" style="left:65.3px;top:515.84px;font-size:8.4px;line-height:10.92px;color:#fff;font-weight:bold;">Savings</div>
<div class="t" style="left:203px;top:515.84px;font-size:8.4px;line-height:10.92px;color:#fff;font-weight:bold;">Tracked</div>
<div class="t" style="left:261px;top:515.84px;font-size:8.4px;line-height:10.92px;color:#fff;font-weight:bold;">Budget</div>
<div class="t" style="left:319px;top:515.84px;font-size:8.4px;line-height:10.92px;color:#fff;font-weight:bold;">% Compl.</div>
<div class="t" style="left:364.5px;top:515.84px;font-size:8.4px;line-height:10.92px;color:#fff;font-weight:bold;">Remaining</div>
<div class="t" style="left:422.4px;top:515.84px;font-size:8.4px;line-height:10.92px;color:#fff;font-weight:bold;">Excess</div>
<div class="r" style="left:315px;top:527.6999999999999px;width:29.25px;height:13.3px;background:linear-gradient(90deg,#f2f2f2,#f7f7f7);"></div>
<div class="t" style="left:65.3px;top:529.85px;font-size:8.7px;line-height:11.31px;color:#575757;font-weight:normal;">Sinking Fund</div>
<div class="t" style="right:1348px;text-align:right;top:529.85px;font-size:8.7px;line-height:11.31px;color:#575757;font-weight:normal;">1,000</div>
<div class="t" style="right:1290px;text-align:right;top:529.85px;font-size:8.7px;line-height:11.31px;color:#575757;font-weight:normal;">1,550</div>
<div class="t" style="left:37.5px;width:600px;text-align:center;top:529.85px;font-size:8.7px;line-height:11.31px;color:#575757;font-weight:normal;">65%</div>
<div class="t" style="right:1187px;text-align:right;top:529.85px;font-size:8.7px;line-height:11.31px;color:#575757;font-weight:normal;">550</div>
<div class="t" style="left:160.3px;width:600px;text-align:center;top:529.85px;font-size:8.7px;line-height:11.31px;color:#575757;font-weight:normal;">-</div>
<div class="r" style="left:315px;top:541.9px;width:19.8px;height:13.3px;background:linear-gradient(90deg,#f2f2f2,#f7f7f7);"></div>
<div class="t" style="left:65.3px;top:544.05px;font-size:8.7px;line-height:11.31px;color:#575757;font-weight:normal;">Investments</div>
<div class="t" style="right:1348px;text-align:right;top:544.05px;font-size:8.7px;line-height:11.31px;color:#575757;font-weight:normal;">800</div>
<div class="t" style="right:1290px;text-align:right;top:544.05px;font-size:8.7px;line-height:11.31px;color:#575757;font-weight:normal;">1,800</div>
<div class="t" style="left:37.5px;width:600px;text-align:center;top:544.05px;font-size:8.7px;line-height:11.31px;color:#575757;font-weight:normal;">44%</div>
<div class="t" style="right:1187px;text-align:right;top:544.05px;font-size:8.7px;line-height:11.31px;color:#575757;font-weight:normal;">1,000</div>
<div class="t" style="left:160.3px;width:600px;text-align:center;top:544.05px;font-size:8.7px;line-height:11.31px;color:#575757;font-weight:normal;">-</div>
<div class="r" style="left:315px;top:556.0999999999999px;width:45px;height:13.3px;background:#8ab7f4;"></div>
<div class="t" style="left:65.3px;top:558.25px;font-size:8.7px;line-height:11.31px;color:#575757;font-weight:normal;">Retirement</div>
<div class="t" style="right:1348px;text-align:right;top:558.25px;font-size:8.7px;line-height:11.31px;color:#575757;font-weight:normal;">400</div>
<div class="t" style="right:1290px;text-align:right;top:558.25px;font-size:8.7px;line-height:11.31px;color:#575757;font-weight:normal;">400</div>
<div class="t" style="left:37.5px;width:600px;text-align:center;top:558.25px;font-size:8.7px;line-height:11.31px;color:#575757;font-weight:normal;">100%</div>
<div class="t" style="left:102px;width:600px;text-align:center;top:558.25px;font-size:8.7px;line-height:11.31px;color:#575757;font-weight:normal;">-</div>
<div class="t" style="left:160.3px;width:600px;text-align:center;top:558.25px;font-size:8.7px;line-height:11.31px;color:#575757;font-weight:normal;">-</div>
<div class="t" style="left:65.3px;top:572.45px;font-size:8.7px;line-height:11.31px;color:#575757;font-weight:normal;">Emergency</div>
<div class="t" style="left:-60px;width:600px;text-align:center;top:572.45px;font-size:8.7px;line-height:11.31px;color:#575757;font-weight:normal;">-</div>
<div class="t" style="left:-1.5px;width:600px;text-align:center;top:572.45px;font-size:8.7px;line-height:11.31px;color:#575757;font-weight:normal;">-</div>
<div class="t" style="left:37.5px;width:600px;text-align:center;top:572.45px;font-size:8.7px;line-height:11.31px;color:#575757;font-weight:normal;">-</div>
<div class="t" style="left:102px;width:600px;text-align:center;top:572.45px;font-size:8.7px;line-height:11.31px;color:#575757;font-weight:normal;">-</div>
<div class="t" style="left:160.3px;width:600px;text-align:center;top:572.45px;font-size:8.7px;line-height:11.31px;color:#575757;font-weight:normal;">-</div>
<div class="r" style="left:63.5px;top:583.6px;width:412.5px;height:1.2px;background:#a3a3a3;"></div>
<div class="t" style="left:65.3px;top:586.65px;font-size:8.7px;line-height:11.31px;color:#2e2e2e;font-weight:bold;">Total</div>
<div class="t" style="right:1348px;text-align:right;top:586.65px;font-size:8.7px;line-height:11.31px;color:#2e2e2e;font-weight:bold;">2,200</div>
<div class="t" style="right:1290px;text-align:right;top:586.65px;font-size:8.7px;line-height:11.31px;color:#2e2e2e;font-weight:bold;">3,750</div>
<div class="t" style="left:37.5px;width:600px;text-align:center;top:586.65px;font-size:8.7px;line-height:11.31px;color:#2e2e2e;font-weight:bold;">59%</div>
<div class="t" style="right:1187px;text-align:right;top:586.65px;font-size:8.7px;line-height:11.31px;color:#2e2e2e;font-weight:bold;">1,550</div>
<div class="t" style="left:160.3px;width:600px;text-align:center;top:586.65px;font-size:8.7px;line-height:11.31px;color:#2e2e2e;font-weight:bold;">-</div>
<div class="r" style="left:63.5px;top:612.1px;width:412.5px;height:14.1px;background:#999bbf;"></div>
<div class="t" style="left:65.3px;top:615.24px;font-size:8.4px;line-height:10.92px;color:#fff;font-weight:bold;">Debt</div>
<div class="t" style="left:203px;top:615.24px;font-size:8.4px;line-height:10.92px;color:#fff;font-weight:bold;">Tracked</div>
<div class="t" style="left:261px;top:615.24px;font-size:8.4px;line-height:10.92px;color:#fff;font-weight:bold;">Budget</div>
<div class="t" style="left:319px;top:615.24px;font-size:8.4px;line-height:10.92px;color:#fff;font-weight:bold;">% Compl.</div>
<div class="t" style="left:364.5px;top:615.24px;font-size:8.4px;line-height:10.92px;color:#fff;font-weight:bold;">Remaining</div>
<div class="t" style="left:422.4px;top:615.24px;font-size:8.4px;line-height:10.92px;color:#fff;font-weight:bold;">Excess</div>
<div class="r" style="left:315px;top:627.0999999999999px;width:45px;height:13.3px;background:#c6c7dc;"></div>
<div class="t" style="left:65.3px;top:629.25px;font-size:8.7px;line-height:11.31px;color:#575757;font-weight:normal;">Student Loan Debt</div>
<div class="t" style="right:1348px;text-align:right;top:629.25px;font-size:8.7px;line-height:11.31px;color:#575757;font-weight:normal;">300</div>
<div class="t" style="right:1290px;text-align:right;top:629.25px;font-size:8.7px;line-height:11.31px;color:#575757;font-weight:normal;">300</div>
<div class="t" style="left:37.5px;width:600px;text-align:center;top:629.25px;font-size:8.7px;line-height:11.31px;color:#575757;font-weight:normal;">100%</div>
<div class="t" style="left:102px;width:600px;text-align:center;top:629.25px;font-size:8.7px;line-height:11.31px;color:#575757;font-weight:normal;">-</div>
<div class="t" style="left:160.3px;width:600px;text-align:center;top:629.25px;font-size:8.7px;line-height:11.31px;color:#575757;font-weight:normal;">-</div>
<div class="t" style="left:65.3px;top:643.45px;font-size:8.7px;line-height:11.31px;color:#575757;font-weight:normal;">Car Debt</div>
<div class="t" style="left:-60px;width:600px;text-align:center;top:643.45px;font-size:8.7px;line-height:11.31px;color:#575757;font-weight:normal;">-</div>
<div class="t" style="right:1290px;text-align:right;top:643.45px;font-size:8.7px;line-height:11.31px;color:#575757;font-weight:normal;">250</div>
<div class="t" style="left:37.5px;width:600px;text-align:center;top:643.45px;font-size:8.7px;line-height:11.31px;color:#575757;font-weight:normal;">0%</div>
<div class="t" style="right:1187px;text-align:right;top:643.45px;font-size:8.7px;line-height:11.31px;color:#575757;font-weight:normal;">250</div>
<div class="t" style="left:160.3px;width:600px;text-align:center;top:643.45px;font-size:8.7px;line-height:11.31px;color:#575757;font-weight:normal;">-</div>
<div class="t" style="left:65.3px;top:657.65px;font-size:8.7px;line-height:11.31px;color:#575757;font-weight:normal;">Credit Card Debt</div>
<div class="t" style="left:-60px;width:600px;text-align:center;top:657.65px;font-size:8.7px;line-height:11.31px;color:#575757;font-weight:normal;">-</div>
<div class="t" style="left:-1.5px;width:600px;text-align:center;top:657.65px;font-size:8.7px;line-height:11.31px;color:#575757;font-weight:normal;">-</div>
<div class="t" style="left:37.5px;width:600px;text-align:center;top:657.65px;font-size:8.7px;line-height:11.31px;color:#575757;font-weight:normal;">-</div>
<div class="t" style="left:102px;width:600px;text-align:center;top:657.65px;font-size:8.7px;line-height:11.31px;color:#575757;font-weight:normal;">-</div>
<div class="t" style="left:160.3px;width:600px;text-align:center;top:657.65px;font-size:8.7px;line-height:11.31px;color:#575757;font-weight:normal;">-</div>
<div class="t" style="left:65.3px;top:671.85px;font-size:8.7px;line-height:11.31px;color:#575757;font-weight:normal;">Mortgage</div>
<div class="t" style="left:-60px;width:600px;text-align:center;top:671.85px;font-size:8.7px;line-height:11.31px;color:#575757;font-weight:normal;">-</div>
<div class="t" style="left:-1.5px;width:600px;text-align:center;top:671.85px;font-size:8.7px;line-height:11.31px;color:#575757;font-weight:normal;">-</div>
<div class="t" style="left:37.5px;width:600px;text-align:center;top:671.85px;font-size:8.7px;line-height:11.31px;color:#575757;font-weight:normal;">-</div>
<div class="t" style="left:102px;width:600px;text-align:center;top:671.85px;font-size:8.7px;line-height:11.31px;color:#575757;font-weight:normal;">-</div>
<div class="t" style="left:160.3px;width:600px;text-align:center;top:671.85px;font-size:8.7px;line-height:11.31px;color:#575757;font-weight:normal;">-</div>
<div class="t" style="left:65.3px;top:686.05px;font-size:8.7px;line-height:11.31px;color:#575757;font-weight:normal;">Personal Debt</div>
<div class="t" style="left:-60px;width:600px;text-align:center;top:686.05px;font-size:8.7px;line-height:11.31px;color:#575757;font-weight:normal;">-</div>
<div class="t" style="left:-1.5px;width:600px;text-align:center;top:686.05px;font-size:8.7px;line-height:11.31px;color:#575757;font-weight:normal;">-</div>
<div class="t" style="left:37.5px;width:600px;text-align:center;top:686.05px;font-size:8.7px;line-height:11.31px;color:#575757;font-weight:normal;">-</div>
<div class="t" style="left:102px;width:600px;text-align:center;top:686.05px;font-size:8.7px;line-height:11.31px;color:#575757;font-weight:normal;">-</div>
<div class="t" style="left:160.3px;width:600px;text-align:center;top:686.05px;font-size:8.7px;line-height:11.31px;color:#575757;font-weight:normal;">-</div>
<div class="r" style="left:63.5px;top:697.1999999999999px;width:412.5px;height:1.2px;background:#a3a3a3;"></div>
<div class="t" style="left:65.3px;top:700.25px;font-size:8.7px;line-height:11.31px;color:#2e2e2e;font-weight:bold;">Total</div>
<div class="t" style="right:1348px;text-align:right;top:700.25px;font-size:8.7px;line-height:11.31px;color:#2e2e2e;font-weight:bold;">300</div>
<div class="t" style="right:1290px;text-align:right;top:700.25px;font-size:8.7px;line-height:11.31px;color:#2e2e2e;font-weight:bold;">550</div>
<div class="t" style="left:37.5px;width:600px;text-align:center;top:700.25px;font-size:8.7px;line-height:11.31px;color:#2e2e2e;font-weight:bold;">55%</div>
<div class="t" style="right:1187px;text-align:right;top:700.25px;font-size:8.7px;line-height:11.31px;color:#2e2e2e;font-weight:bold;">250</div>
<div class="t" style="left:160.3px;width:600px;text-align:center;top:700.25px;font-size:8.7px;line-height:11.31px;color:#2e2e2e;font-weight:bold;">-</div>
<div class="r" style="left:488px;top:285px;width:647px;height:168.5px;border:1px solid #e6e6e6;background:#fff"></div>
<div class="r" style="left:500px;top:295px;width:112px;height:16px;border-radius:4px;background:#f7f7f7;box-shadow:0 0 4px 2px #f7f7f7"></div>
<div class="t" style="left:510.4px;top:297.29px;font-size:9.25px;line-height:12.03px;color:#7a7a7a;font-weight:normal;">Tracked (vs. Budget)</div>
<div class="r" style="left:767.2px;top:291.5px;width:350.5px;height:21px;border:1px solid #e2e2e2;background:#fff"></div>
<div class="t" style="left:795px;top:298.56px;font-size:7.75px;line-height:10.08px;color:#a5a5a5;font-weight:normal;">Normalized</div>
<div class="t" style="left:869.5px;top:298.56px;font-size:7.75px;line-height:10.08px;color:#a5a5a5;font-weight:normal;">Budget</div>
<div class="t" style="left:934px;top:298.56px;font-size:7.75px;line-height:10.08px;color:#a5a5a5;font-weight:normal;">Income</div>
<div class="t" style="left:981.4px;top:298.56px;font-size:7.75px;line-height:10.08px;color:#a5a5a5;font-weight:normal;">Expenses</div>
<div class="t" style="left:1035.8px;top:298.56px;font-size:7.75px;line-height:10.08px;color:#a5a5a5;font-weight:normal;">Savings</div>
<div class="t" style="left:1084.9px;top:298.56px;font-size:7.75px;line-height:10.08px;color:#a5a5a5;font-weight:normal;">Debt</div>
<div class="r" style="left:841.5px;top:297px;width:1.0px;height:12px;background:#e0e0e0;"></div>
<div class="r" style="left:904px;top:297px;width:1px;height:12px;background:#e0e0e0;"></div>
<div class="t" style="right:1065px;text-align:right;top:421.29px;font-size:7.1px;line-height:9.23px;color:#c4c4c4;font-weight:normal;">1,000.00</div>
<div class="t" style="right:1065px;text-align:right;top:409.04px;font-size:7.1px;line-height:9.23px;color:#c4c4c4;font-weight:normal;">2,000.00</div>
<div class="t" style="right:1065px;text-align:right;top:396.79px;font-size:7.1px;line-height:9.23px;color:#c4c4c4;font-weight:normal;">3,000.00</div>
<div class="t" style="right:1065px;text-align:right;top:384.54px;font-size:7.1px;line-height:9.23px;color:#c4c4c4;font-weight:normal;">4,000.00</div>
<div class="t" style="right:1065px;text-align:right;top:372.29px;font-size:7.1px;line-height:9.23px;color:#c4c4c4;font-weight:normal;">5,000.00</div>
<div class="t" style="right:1065px;text-align:right;top:360.04px;font-size:7.1px;line-height:9.23px;color:#c4c4c4;font-weight:normal;">6,000.00</div>
<div class="t" style="right:1065px;text-align:right;top:347.79px;font-size:7.1px;line-height:9.23px;color:#c4c4c4;font-weight:normal;">7,000.00</div>
<div class="t" style="right:1065px;text-align:right;top:335.54px;font-size:7.1px;line-height:9.23px;color:#c4c4c4;font-weight:normal;">8,000.00</div>
<div class="t" style="right:1065px;text-align:right;top:323.29px;font-size:7.1px;line-height:9.23px;color:#c4c4c4;font-weight:normal;">9,000.00</div>
<div class="t" style="right:1069px;text-align:right;top:433.19px;font-size:7.1px;line-height:9.23px;color:#c4c4c4;font-weight:normal;">-</div>
<div class="t" style="left:248.8px;width:600px;text-align:center;top:443.19px;font-size:7.1px;line-height:9.23px;color:#c4c4c4;font-weight:normal;">Jan</div>
<div class="t" style="left:296.85px;width:600px;text-align:center;top:443.19px;font-size:7.1px;line-height:9.23px;color:#c4c4c4;font-weight:normal;">Feb</div>
<div class="t" style="left:344.9px;width:600px;text-align:center;top:443.19px;font-size:7.1px;line-height:9.23px;color:#c4c4c4;font-weight:normal;">Mar</div>
<div class="t" style="left:392.95px;width:600px;text-align:center;top:443.19px;font-size:7.1px;line-height:9.23px;color:#c4c4c4;font-weight:normal;">Apr</div>
<div class="t" style="left:441.0px;width:600px;text-align:center;top:443.19px;font-size:7.1px;line-height:9.23px;color:#c4c4c4;font-weight:normal;">May</div>
<div class="t" style="left:489.05px;width:600px;text-align:center;top:443.19px;font-size:7.1px;line-height:9.23px;color:#c4c4c4;font-weight:normal;">Jun</div>
<div class="t" style="left:537.1px;width:600px;text-align:center;top:443.19px;font-size:7.1px;line-height:9.23px;color:#c4c4c4;font-weight:normal;">Jul</div>
<div class="t" style="left:585.15px;width:600px;text-align:center;top:443.19px;font-size:7.1px;line-height:9.23px;color:#c4c4c4;font-weight:normal;">Aug</div>
<div class="t" style="left:633.2px;width:600px;text-align:center;top:443.19px;font-size:7.1px;line-height:9.23px;color:#c4c4c4;font-weight:normal;">Sep</div>
<div class="t" style="left:681.25px;width:600px;text-align:center;top:443.19px;font-size:7.1px;line-height:9.23px;color:#c4c4c4;font-weight:normal;">Oct</div>
<div class="t" style="left:729.3px;width:600px;text-align:center;top:443.19px;font-size:7.1px;line-height:9.23px;color:#c4c4c4;font-weight:normal;">Nov</div>
<div class="t" style="left:777.35px;width:600px;text-align:center;top:443.19px;font-size:7.1px;line-height:9.23px;color:#c4c4c4;font-weight:normal;">Dec</div>
<div class="r" style="left:488px;top:469.8px;width:316.5px;height:154.5px;border:1px solid #e6e6e6;background:#fff"></div>
<div class="r" style="left:501px;top:481.3px;width:136.65px;height:14.5px;border-radius:4px;background:#f7f7f7;box-shadow:0 0 4px 2px #f7f7f7"></div>
<div class="t" style="left:510.8px;top:483.09px;font-size:9.55px;line-height:12.42px;color:#7a7a7a;font-weight:normal;">Income Allocation (Tracked)</div>
<div class="r" style="left:614px;top:511.90000000000003px;width:3.7px;height:14.2px;background:#2f9e6b;"></div>
<div class="t" style="left:623.4px;top:515.71px;font-size:8.6px;line-height:11.18px;color:#575757;font-weight:normal;">Work Income</div>
<div class="t" style="right:848.4px;text-align:right;top:515.71px;font-size:8.6px;line-height:11.18px;color:#575757;font-weight:normal;">6,000</div>
<div class="t" style="right:817.2px;text-align:right;top:515.71px;font-size:8.6px;line-height:11.18px;color:#c9c9c9;font-weight:normal;">98%</div>
<div class="r" style="left:614px;top:526.1px;width:3.7px;height:14.2px;background:#7fd5ad;"></div>
<div class="t" style="left:623.4px;top:529.91px;font-size:8.6px;line-height:11.18px;color:#575757;font-weight:normal;">Capital Income</div>
<div class="t" style="right:848.4px;text-align:right;top:529.91px;font-size:8.6px;line-height:11.18px;color:#575757;font-weight:normal;">150</div>
<div class="t" style="right:817.2px;text-align:right;top:529.91px;font-size:8.6px;line-height:11.18px;color:#c9c9c9;font-weight:normal;">2%</div>
<div class="r" style="left:622.4px;top:597.3px;width:161.5px;height:0;border-top:1px dotted #cfcfcf"></div>
<div class="t" style="left:623.4px;top:600.91px;font-size:8.6px;line-height:11.18px;color:#2e2e2e;font-weight:bold;">Total</div>
<div class="t" style="right:848.4px;text-align:right;top:600.91px;font-size:8.6px;line-height:11.18px;color:#2e2e2e;font-weight:bold;">6,150</div>
<div class="r" style="left:818px;top:469.8px;width:316.5px;height:154.5px;border:1px solid #e6e6e6;background:#fff"></div>
<div class="r" style="left:831px;top:481.3px;width:146.55px;height:14.5px;border-radius:4px;background:#f7f7f7;box-shadow:0 0 4px 2px #f7f7f7"></div>
<div class="t" style="left:840.8px;top:483.09px;font-size:9.55px;line-height:12.42px;color:#7a7a7a;font-weight:normal;">Expenses Allocation (Tracked)</div>
<div class="r" style="left:944px;top:511.90000000000003px;width:3.7px;height:14.2px;background:#c2166a;"></div>
<div class="t" style="left:953.4px;top:515.71px;font-size:8.6px;line-height:11.18px;color:#575757;font-weight:normal;">Housing</div>
<div class="t" style="right:518.4px;text-align:right;top:515.71px;font-size:8.6px;line-height:11.18px;color:#575757;font-weight:normal;">1,620</div>
<div class="t" style="right:487.2px;text-align:right;top:515.71px;font-size:8.6px;line-height:11.18px;color:#c9c9c9;font-weight:normal;">60%</div>
<div class="r" style="left:944px;top:526.1px;width:3.7px;height:14.2px;background:#e93590;"></div>
<div class="t" style="left:953.4px;top:529.91px;font-size:8.6px;line-height:11.18px;color:#575757;font-weight:normal;">Fun</div>
<div class="t" style="right:518.4px;text-align:right;top:529.91px;font-size:8.6px;line-height:11.18px;color:#575757;font-weight:normal;">350</div>
<div class="t" style="right:487.2px;text-align:right;top:529.91px;font-size:8.6px;line-height:11.18px;color:#c9c9c9;font-weight:normal;">13%</div>
<div class="r" style="left:944px;top:540.3000000000001px;width:3.7px;height:14.2px;background:#f27db4;"></div>
<div class="t" style="left:953.4px;top:544.11px;font-size:8.6px;line-height:11.18px;color:#575757;font-weight:normal;">Transportation</div>
<div class="t" style="right:518.4px;text-align:right;top:544.11px;font-size:8.6px;line-height:11.18px;color:#575757;font-weight:normal;">300</div>
<div class="t" style="right:487.2px;text-align:right;top:544.11px;font-size:8.6px;line-height:11.18px;color:#c9c9c9;font-weight:normal;">11%</div>
<div class="r" style="left:944px;top:554.5px;width:3.7px;height:14.2px;background:#f5a6ca;"></div>
<div class="t" style="left:953.4px;top:558.31px;font-size:8.6px;line-height:11.18px;color:#575757;font-weight:normal;">Groceries</div>
<div class="t" style="right:518.4px;text-align:right;top:558.31px;font-size:8.6px;line-height:11.18px;color:#575757;font-weight:normal;">260</div>
<div class="t" style="right:487.2px;text-align:right;top:558.31px;font-size:8.6px;line-height:11.18px;color:#c9c9c9;font-weight:normal;">10%</div>
<div class="r" style="left:944px;top:568.7px;width:3.7px;height:14.2px;background:#f9cfe2;"></div>
<div class="t" style="left:953.4px;top:572.51px;font-size:8.6px;line-height:11.18px;color:#575757;font-weight:normal;">Self-Care</div>
<div class="t" style="right:518.4px;text-align:right;top:572.51px;font-size:8.6px;line-height:11.18px;color:#575757;font-weight:normal;">180</div>
<div class="t" style="right:487.2px;text-align:right;top:572.51px;font-size:8.6px;line-height:11.18px;color:#c9c9c9;font-weight:normal;">7%</div>
<div class="r" style="left:944px;top:582.9000000000001px;width:3.7px;height:14.2px;background:#f1f1f1;"></div>
<div class="t" style="left:953.4px;top:586.71px;font-size:8.6px;line-height:11.18px;color:#575757;font-weight:normal;">Other</div>
<div class="t" style="right:518.4px;text-align:right;top:586.71px;font-size:8.6px;line-height:11.18px;color:#575757;font-weight:normal;">10</div>
<div class="t" style="right:487.2px;text-align:right;top:586.71px;font-size:8.6px;line-height:11.18px;color:#c9c9c9;font-weight:normal;">0%</div>
<div class="r" style="left:952.4px;top:597.3px;width:161.5px;height:0;border-top:1px dotted #cfcfcf"></div>
<div class="t" style="left:953.4px;top:600.91px;font-size:8.6px;line-height:11.18px;color:#2e2e2e;font-weight:bold;">Total</div>
<div class="t" style="right:518.4px;text-align:right;top:600.91px;font-size:8.6px;line-height:11.18px;color:#2e2e2e;font-weight:bold;">2,720</div>
<div class="r" style="left:488px;top:640px;width:316.5px;height:154.5px;border:1px solid #e6e6e6;background:#fff"></div>
<div class="r" style="left:501px;top:651.5px;width:141.6px;height:14.5px;border-radius:4px;background:#f7f7f7;box-shadow:0 0 4px 2px #f7f7f7"></div>
<div class="t" style="left:510.8px;top:653.29px;font-size:9.55px;line-height:12.42px;color:#7a7a7a;font-weight:normal;">Savings Allocation (Tracked)</div>
<div class="r" style="left:614px;top:682.3000000000001px;width:3.7px;height:14.2px;background:#2b63c7;"></div>
<div class="t" style="left:623.4px;top:686.11px;font-size:8.6px;line-height:11.18px;color:#575757;font-weight:normal;">Sinking Fund</div>
<div class="t" style="right:848.4px;text-align:right;top:686.11px;font-size:8.6px;line-height:11.18px;color:#575757;font-weight:normal;">1,000</div>
<div class="t" style="right:817.2px;text-align:right;top:686.11px;font-size:8.6px;line-height:11.18px;color:#c9c9c9;font-weight:normal;">45%</div>
<div class="r" style="left:614px;top:696.5px;width:3.7px;height:14.2px;background:#4a89e8;"></div>
<div class="t" style="left:623.4px;top:700.31px;font-size:8.6px;line-height:11.18px;color:#575757;font-weight:normal;">Investments</div>
<div class="t" style="right:848.4px;text-align:right;top:700.31px;font-size:8.6px;line-height:11.18px;color:#575757;font-weight:normal;">800</div>
<div class="t" style="right:817.2px;text-align:right;top:700.31px;font-size:8.6px;line-height:11.18px;color:#c9c9c9;font-weight:normal;">36%</div>
<div class="r" style="left:614px;top:710.7px;width:3.7px;height:14.2px;background:#8db5f0;"></div>
<div class="t" style="left:623.4px;top:714.51px;font-size:8.6px;line-height:11.18px;color:#575757;font-weight:normal;">Retirement</div>
<div class="t" style="right:848.4px;text-align:right;top:714.51px;font-size:8.6px;line-height:11.18px;color:#575757;font-weight:normal;">400</div>
<div class="t" style="right:817.2px;text-align:right;top:714.51px;font-size:8.6px;line-height:11.18px;color:#c9c9c9;font-weight:normal;">18%</div>
<div class="r" style="left:622.4px;top:767.5px;width:161.5px;height:0;border-top:1px dotted #cfcfcf"></div>
<div class="t" style="left:623.4px;top:771.31px;font-size:8.6px;line-height:11.18px;color:#2e2e2e;font-weight:bold;">Total</div>
<div class="t" style="right:848.4px;text-align:right;top:771.31px;font-size:8.6px;line-height:11.18px;color:#2e2e2e;font-weight:bold;">2,200</div>
<div class="r" style="left:818px;top:640px;width:316.5px;height:154.5px;border:1px solid #e6e6e6;background:#fff"></div>
<div class="r" style="left:831px;top:651.5px;width:126.75px;height:14.5px;border-radius:4px;background:#f7f7f7;box-shadow:0 0 4px 2px #f7f7f7"></div>
<div class="t" style="left:840.8px;top:653.29px;font-size:9.55px;line-height:12.42px;color:#7a7a7a;font-weight:normal;">Debt Allocation (Tracked)</div>
<div class="r" style="left:944px;top:682.3000000000001px;width:3.7px;height:14.2px;background:#6c70a8;"></div>
<div class="t" style="left:953.4px;top:686.11px;font-size:8.6px;line-height:11.18px;color:#575757;font-weight:normal;">Student Loan Debt</div>
<div class="t" style="right:518.4px;text-align:right;top:686.11px;font-size:8.6px;line-height:11.18px;color:#575757;font-weight:normal;">300</div>
<div class="t" style="right:487.2px;text-align:right;top:686.11px;font-size:8.6px;line-height:11.18px;color:#c9c9c9;font-weight:normal;">100%</div>
<div class="r" style="left:952.4px;top:767.5px;width:161.5px;height:0;border-top:1px dotted #cfcfcf"></div>
<div class="t" style="left:953.4px;top:771.31px;font-size:8.6px;line-height:11.18px;color:#2e2e2e;font-weight:bold;">Total</div>
<div class="t" style="right:518.4px;text-align:right;top:771.31px;font-size:8.6px;line-height:11.18px;color:#2e2e2e;font-weight:bold;">300</div>
<div class="r" style="left:1147.5px;top:285.6px;width:371.5px;height:282.9px;border:1px solid #e6e6e6;background:#fff"></div>
<div class="r" style="left:1157px;top:295.5px;width:92px;height:15.0px;border-radius:4px;background:#f7f7f7;box-shadow:0 0 4px 2px #f7f7f7"></div>
<div class="t" style="left:1167px;top:297.42px;font-size:9.2px;line-height:11.96px;color:#7a7a7a;font-weight:normal;">Rates vs. Income</div>
<div class="t" style="right:419.5px;text-align:right;top:434.01px;font-size:6.9px;line-height:8.97px;color:#c8c8c8;font-weight:normal;">0%</div>
<div class="t" style="right:419.5px;text-align:right;top:420.07px;font-size:6.9px;line-height:8.97px;color:#c8c8c8;font-weight:normal;">10%</div>
<div class="t" style="right:419.5px;text-align:right;top:406.13px;font-size:6.9px;line-height:8.97px;color:#c8c8c8;font-weight:normal;">20%</div>
<div class="t" style="right:419.5px;text-align:right;top:392.19px;font-size:6.9px;line-height:8.97px;color:#c8c8c8;font-weight:normal;">30%</div>
<div class="t" style="right:419.5px;text-align:right;top:378.25px;font-size:6.9px;line-height:8.97px;color:#c8c8c8;font-weight:normal;">40%</div>
<div class="t" style="right:419.5px;text-align:right;top:364.31px;font-size:6.9px;line-height:8.97px;color:#c8c8c8;font-weight:normal;">50%</div>
<div class="t" style="right:419.5px;text-align:right;top:350.38px;font-size:6.9px;line-height:8.97px;color:#c8c8c8;font-weight:normal;">60%</div>
<div class="t" style="right:419.5px;text-align:right;top:336.44px;font-size:6.9px;line-height:8.97px;color:#c8c8c8;font-weight:normal;">70%</div>
<div class="t" style="left:899.65px;width:600px;text-align:center;top:444.42px;font-size:6.9px;line-height:8.97px;color:#c8c8c8;font-weight:normal;">Jan</div>
<div class="t" style="left:925.6px;width:600px;text-align:center;top:444.42px;font-size:6.9px;line-height:8.97px;color:#c8c8c8;font-weight:normal;">Feb</div>
<div class="t" style="left:951.55px;width:600px;text-align:center;top:444.42px;font-size:6.9px;line-height:8.97px;color:#c8c8c8;font-weight:normal;">Mar</div>
<div class="t" style="left:977.5px;width:600px;text-align:center;top:444.42px;font-size:6.9px;line-height:8.97px;color:#c8c8c8;font-weight:normal;">Apr</div>
<div class="t" style="left:1003.45px;width:600px;text-align:center;top:444.42px;font-size:6.9px;line-height:8.97px;color:#c8c8c8;font-weight:normal;">May</div>
<div class="t" style="left:1029.4px;width:600px;text-align:center;top:444.42px;font-size:6.9px;line-height:8.97px;color:#c8c8c8;font-weight:normal;">Jun</div>
<div class="t" style="left:1055.35px;width:600px;text-align:center;top:444.42px;font-size:6.9px;line-height:8.97px;color:#c8c8c8;font-weight:normal;">Jul</div>
<div class="t" style="left:1081.3px;width:600px;text-align:center;top:444.42px;font-size:6.9px;line-height:8.97px;color:#c8c8c8;font-weight:normal;">Aug</div>
<div class="t" style="left:1107.25px;width:600px;text-align:center;top:444.42px;font-size:6.9px;line-height:8.97px;color:#c8c8c8;font-weight:normal;">Sep</div>
<div class="t" style="left:1133.2px;width:600px;text-align:center;top:444.42px;font-size:6.9px;line-height:8.97px;color:#c8c8c8;font-weight:normal;">Oct</div>
<div class="t" style="left:1159.15px;width:600px;text-align:center;top:444.42px;font-size:6.9px;line-height:8.97px;color:#c8c8c8;font-weight:normal;">Nov</div>
<div class="t" style="left:1185.1px;width:600px;text-align:center;top:444.42px;font-size:6.9px;line-height:8.97px;color:#c8c8c8;font-weight:normal;">Dec</div>
<div class="t" style="right:283.7px;text-align:right;top:473.21px;font-size:8.3px;line-height:10.79px;color:#333;font-weight:bold;">Tracked</div>
<div class="t" style="right:235.3px;text-align:right;top:473.21px;font-size:8.3px;line-height:10.79px;color:#333;font-weight:bold;">%</div>
<div class="t" style="right:163.9px;text-align:right;top:473.21px;font-size:8.3px;line-height:10.79px;color:#aaa;font-weight:bold;">Budget</div>
<div class="t" style="right:115px;text-align:right;top:473.21px;font-size:8.3px;line-height:10.79px;color:#aaa;font-weight:bold;">%</div>
<div class="r" style="left:1166.7px;top:484px;width:334.3px;height:1.2px;background:#9a9a9a;"></div>
<div class="r" style="left:1166.7px;top:498px;width:334px;height:0;border-top:1px dotted #cfcfcf"></div>
<div class="r" style="left:1320.6px;top:512.4px;width:60.2px;height:14.2px;background:#d5e5fb;"></div>
<div class="r" style="left:1320.6px;top:526.6px;width:60.2px;height:13.9px;background:#e6e6ec;"></div>
<div class="r" style="left:1166.7px;top:540.6px;width:334.3px;height:1.4px;background:#a0a0a0;"></div>
<div class="t" style="left:1168.3px;top:487.51px;font-size:8.6px;line-height:11.18px;color:#575757;font-weight:normal;">Income</div>
<div class="t" style="right:283.7px;text-align:right;top:487.51px;font-size:8.6px;line-height:11.18px;color:#575757;font-weight:normal;">6,150</div>
<div class="t" style="right:163.9px;text-align:right;top:487.51px;font-size:8.6px;line-height:11.18px;color:#b0b0b0;font-weight:normal;">7,350</div>
<div class="t" style="left:1168.3px;top:501.61px;font-size:8.6px;line-height:11.18px;color:#575757;font-weight:normal;">Expenses</div>
<div class="t" style="right:283.7px;text-align:right;top:501.61px;font-size:8.6px;line-height:11.18px;color:#575757;font-weight:normal;">2,720</div>
<div class="t" style="right:235.3px;text-align:right;top:501.61px;font-size:8.6px;line-height:11.18px;color:#575757;font-weight:normal;">44.2%</div>
<div class="t" style="right:163.9px;text-align:right;top:501.61px;font-size:8.6px;line-height:11.18px;color:#b0b0b0;font-weight:normal;">3,050</div>
<div class="t" style="right:115px;text-align:right;top:501.61px;font-size:8.6px;line-height:11.18px;color:#b0b0b0;font-weight:normal;">41.5%</div>
<div class="t" style="left:1168.3px;top:515.71px;font-size:8.6px;line-height:11.18px;color:#575757;font-weight:normal;">Savings</div>
<div class="t" style="right:283.7px;text-align:right;top:515.71px;font-size:8.6px;line-height:11.18px;color:#575757;font-weight:normal;">2,200</div>
<div class="t" style="right:235.3px;text-align:right;top:515.71px;font-size:8.6px;line-height:11.18px;color:#3a6fd0;font-weight:normal;">35.8%</div>
<div class="t" style="right:163.9px;text-align:right;top:515.71px;font-size:8.6px;line-height:11.18px;color:#b0b0b0;font-weight:normal;">3,750</div>
<div class="t" style="right:115px;text-align:right;top:515.71px;font-size:8.6px;line-height:11.18px;color:#b0b0b0;font-weight:normal;">51.0%</div>
<div class="t" style="left:1168.3px;top:529.81px;font-size:8.6px;line-height:11.18px;color:#575757;font-weight:normal;">Debt</div>
<div class="t" style="right:283.7px;text-align:right;top:529.81px;font-size:8.6px;line-height:11.18px;color:#575757;font-weight:normal;">300</div>
<div class="t" style="right:235.3px;text-align:right;top:529.81px;font-size:8.6px;line-height:11.18px;color:#575757;font-weight:normal;">4.9%</div>
<div class="t" style="right:163.9px;text-align:right;top:529.81px;font-size:8.6px;line-height:11.18px;color:#b0b0b0;font-weight:normal;">550</div>
<div class="t" style="right:115px;text-align:right;top:529.81px;font-size:8.6px;line-height:11.18px;color:#b0b0b0;font-weight:normal;">7.5%</div>
<div class="t" style="left:1168.3px;top:543.91px;font-size:8.6px;line-height:11.18px;color:#575757;font-weight:normal;">Balance</div>
<div class="t" style="right:283.7px;text-align:right;top:543.91px;font-size:8.6px;line-height:11.18px;color:#575757;font-weight:normal;">930</div>
<div class="t" style="right:235.3px;text-align:right;top:543.91px;font-size:8.6px;line-height:11.18px;color:#575757;font-weight:normal;">15.1%</div>
<div class="t" style="left:1125px;width:600px;text-align:center;top:543.91px;font-size:8.6px;line-height:11.18px;color:#bbb;font-weight:normal;">-</div>
<div class="t" style="right:115px;text-align:right;top:543.91px;font-size:8.6px;line-height:11.18px;color:#b0b0b0;font-weight:normal;">0.0%</div>
<div class="r" style="left:1148px;top:583.4px;width:371px;height:210.6px;border:1px solid #e6e6e6;background:#fff"></div>
<div class="r" style="left:1157px;top:592.5px;width:89px;height:16.0px;border-radius:4px;background:#f7f7f7;box-shadow:0 0 4px 2px #f7f7f7"></div>
<div class="t" style="left:1167.1px;top:594.75px;font-size:9.45px;line-height:12.29px;color:#7a7a7a;font-weight:normal;">Account Insights</div>
<div class="t" style="left:1050.7px;width:600px;text-align:center;top:587.98px;font-size:6.8px;line-height:8.84px;color:#c4c4c4;font-weight:normal;">View</div>
<div class="t" style="left:1110.9px;width:600px;text-align:center;top:587.98px;font-size:6.8px;line-height:8.84px;color:#c4c4c4;font-weight:normal;">Sort Acc. by</div>
<div class="t" style="left:1171px;width:600px;text-align:center;top:587.98px;font-size:6.8px;line-height:8.84px;color:#c4c4c4;font-weight:normal;">KPIs</div>
<div class="r" style="left:1320px;top:597.2px;width:181px;height:15.1px;background:#ebebeb;box-shadow:inset 0 0 0 1px #dedede;"></div>
<div class="r" style="left:1380px;top:597.2px;width:1px;height:15.1px;background:#d8d8d8;"></div>
<div class="r" style="left:1440.3px;top:597.2px;width:1.0px;height:15.1px;background:#d8d8d8;"></div>
<div class="t" style="left:1050.7px;width:600px;text-align:center;top:600.84px;font-size:8.1px;line-height:10.53px;color:#555;font-weight:normal;">ST Assets (F)</div>
<div class="t" style="left:1110.4px;width:600px;text-align:center;top:600.84px;font-size:8.1px;line-height:10.53px;color:#555;font-weight:normal;">Tx Vol.</div>
<div class="t" style="left:1171px;width:600px;text-align:center;top:600.84px;font-size:8.1px;line-height:10.53px;color:#555;font-weight:normal;">Movements</div>
<div class="t" style="right:283.7px;text-align:right;top:629.41px;font-size:8.3px;line-height:10.79px;color:#333;font-weight:bold;">Income</div>
<div class="t" style="right:224px;text-align:right;top:629.41px;font-size:8.3px;line-height:10.79px;color:#333;font-weight:bold;">Expenses</div>
<div class="t" style="right:164px;text-align:right;top:629.41px;font-size:8.3px;line-height:10.79px;color:#333;font-weight:bold;">Sav.+Debt</div>
<div class="t" style="right:103.7px;text-align:right;top:629.41px;font-size:8.3px;line-height:10.79px;color:#333;font-weight:bold;">Transfers</div>
<div class="r" style="left:1166.7px;top:639.6px;width:334.3px;height:1.2px;background:#9a9a9a;"></div>
<div class="r" style="left:1169.4px;top:646.5px;width:4.2px;height:4.2px;border-radius:50%;background:#4a84d6"></div>
<div class="t" style="left:1177px;top:643.01px;font-size:8.6px;line-height:11.18px;color:#575757;font-weight:normal;">Bank Account</div>
<div class="t" style="right:283.7px;text-align:right;top:643.01px;font-size:8.6px;line-height:11.18px;color:#575757;font-weight:normal;">6,150</div>
<div class="t" style="right:220.8px;text-align:right;top:643.01px;font-size:8.6px;line-height:11.18px;color:#575757;font-weight:normal;">(1,910)</div>
<div class="t" style="right:161px;text-align:right;top:643.01px;font-size:8.6px;line-height:11.18px;color:#575757;font-weight:normal;">(2,500)</div>
<div class="t" style="right:100.7px;text-align:right;top:643.01px;font-size:8.6px;line-height:11.18px;color:#575757;font-weight:normal;">(300)</div>
<div class="r" style="left:1169.4px;top:660.7px;width:4.2px;height:4.2px;border-radius:50%;background:#4a84d6"></div>
<div class="t" style="left:1177px;top:657.21px;font-size:8.6px;line-height:11.18px;color:#575757;font-weight:normal;">Savings Account</div>
<div class="t" style="left:1004.5px;width:600px;text-align:center;top:657.21px;font-size:8.6px;line-height:11.18px;color:#575757;font-weight:normal;">-</div>
<div class="t" style="left:1064.4px;width:600px;text-align:center;top:657.21px;font-size:8.6px;line-height:11.18px;color:#575757;font-weight:normal;">-</div>
<div class="t" style="right:164px;text-align:right;top:657.21px;font-size:8.6px;line-height:11.18px;color:#575757;font-weight:normal;">1,000</div>
<div class="t" style="left:1185px;width:600px;text-align:center;top:657.21px;font-size:8.6px;line-height:11.18px;color:#575757;font-weight:normal;">-</div>
<div class="r" style="left:1169.4px;top:674.9px;width:4.2px;height:4.2px;border-radius:50%;background:#4a84d6"></div>
<div class="t" style="left:1177px;top:671.41px;font-size:8.6px;line-height:11.18px;color:#575757;font-weight:normal;">Cash on Hand</div>
<div class="t" style="left:1004.5px;width:600px;text-align:center;top:671.41px;font-size:8.6px;line-height:11.18px;color:#575757;font-weight:normal;">-</div>
<div class="t" style="right:220.8px;text-align:right;top:671.41px;font-size:8.6px;line-height:11.18px;color:#575757;font-weight:normal;">(280)</div>
<div class="t" style="left:1124.8px;width:600px;text-align:center;top:671.41px;font-size:8.6px;line-height:11.18px;color:#575757;font-weight:normal;">-</div>
<div class="t" style="right:103.7px;text-align:right;top:671.41px;font-size:8.6px;line-height:11.18px;color:#575757;font-weight:normal;">300</div>
<div class="r" style="left:1169.4px;top:689.1px;width:4.2px;height:4.2px;border-radius:50%;background:#4a84d6"></div>
<div class="t" style="left:1177px;top:685.61px;font-size:8.6px;line-height:11.18px;color:#575757;font-weight:normal;width:84px;overflow:hidden;">Emergency Fund HYSA</div>
<div class="t" style="left:1004.5px;width:600px;text-align:center;top:685.61px;font-size:8.6px;line-height:11.18px;color:#575757;font-weight:normal;">-</div>
<div class="t" style="left:1064.4px;width:600px;text-align:center;top:685.61px;font-size:8.6px;line-height:11.18px;color:#575757;font-weight:normal;">-</div>
<div class="t" style="left:1124.8px;width:600px;text-align:center;top:685.61px;font-size:8.6px;line-height:11.18px;color:#575757;font-weight:normal;">-</div>
<div class="t" style="left:1185px;width:600px;text-align:center;top:685.61px;font-size:8.6px;line-height:11.18px;color:#575757;font-weight:normal;">-</div>
<div class="r" style="left:1169.4px;top:703.3px;width:4.2px;height:4.2px;border-radius:50%;background:#4a84d6"></div>
<div class="t" style="left:1177px;top:699.81px;font-size:8.6px;line-height:11.18px;color:#575757;font-weight:normal;">IP Bank Account</div>
<div class="t" style="left:1004.5px;width:600px;text-align:center;top:699.81px;font-size:8.6px;line-height:11.18px;color:#575757;font-weight:normal;">-</div>
<div class="t" style="left:1064.4px;width:600px;text-align:center;top:699.81px;font-size:8.6px;line-height:11.18px;color:#575757;font-weight:normal;">-</div>
<div class="t" style="left:1124.8px;width:600px;text-align:center;top:699.81px;font-size:8.6px;line-height:11.18px;color:#575757;font-weight:normal;">-</div>
<div class="t" style="left:1185px;width:600px;text-align:center;top:699.81px;font-size:8.6px;line-height:11.18px;color:#575757;font-weight:normal;">-</div>
<div class="r" style="left:1166.7px;top:711.7px;width:334px;height:0;border-top:1px dotted #ececec"></div>
<div class="t" style="left:1168.5px;top:714.01px;font-size:8.6px;line-height:11.18px;color:#d0d0d0;font-weight:normal;">&#8721; Liabilities ST</div>
<div class="t" style="left:1004.5px;width:600px;text-align:center;top:714.01px;font-size:8.6px;line-height:11.18px;color:#d0d0d0;font-weight:normal;">-</div>
<div class="t" style="right:220.8px;text-align:right;top:714.01px;font-size:8.6px;line-height:11.18px;color:#d0d0d0;font-weight:normal;">(530)</div>
<div class="t" style="left:1124.8px;width:600px;text-align:center;top:714.01px;font-size:8.6px;line-height:11.18px;color:#d0d0d0;font-weight:normal;">-</div>
<div class="t" style="left:1185px;width:600px;text-align:center;top:714.01px;font-size:8.6px;line-height:11.18px;color:#d0d0d0;font-weight:normal;">-</div>
<div class="r" style="left:1166.7px;top:725.9000000000001px;width:334px;height:0;border-top:1px dotted #ececec"></div>
<div class="t" style="left:1168.5px;top:728.21px;font-size:8.6px;line-height:11.18px;color:#d0d0d0;font-weight:normal;">&#8721; Assets LT</div>
<div class="t" style="right:280.7px;text-align:right;top:728.21px;font-size:8.6px;line-height:11.18px;color:#d0d0d0;font-weight:normal;">(150)</div>
<div class="t" style="left:1064.4px;width:600px;text-align:center;top:728.21px;font-size:8.6px;line-height:11.18px;color:#d0d0d0;font-weight:normal;">-</div>
<div class="t" style="right:164px;text-align:right;top:728.21px;font-size:8.6px;line-height:11.18px;color:#d0d0d0;font-weight:normal;">1,200</div>
<div class="t" style="left:1185px;width:600px;text-align:center;top:728.21px;font-size:8.6px;line-height:11.18px;color:#d0d0d0;font-weight:normal;">-</div>
<div class="r" style="left:1166.7px;top:740.1px;width:334px;height:0;border-top:1px dotted #ececec"></div>
<div class="t" style="left:1168.5px;top:742.41px;font-size:8.6px;line-height:11.18px;color:#d0d0d0;font-weight:normal;">&#8721; Liabilities LT</div>
<div class="t" style="left:1004.5px;width:600px;text-align:center;top:742.41px;font-size:8.6px;line-height:11.18px;color:#d0d0d0;font-weight:normal;">-</div>
<div class="t" style="left:1064.4px;width:600px;text-align:center;top:742.41px;font-size:8.6px;line-height:11.18px;color:#d0d0d0;font-weight:normal;">-</div>
<div class="t" style="right:164px;text-align:right;top:742.41px;font-size:8.6px;line-height:11.18px;color:#d0d0d0;font-weight:normal;">300</div>
<div class="t" style="left:1185px;width:600px;text-align:center;top:742.41px;font-size:8.6px;line-height:11.18px;color:#d0d0d0;font-weight:normal;">-</div>
<div class="r" style="left:1166.7px;top:753px;width:334.3px;height:1.2px;background:#9a9a9a;"></div>
<div class="t" style="left:1177px;top:756.81px;font-size:8.6px;line-height:11.18px;color:#2e2e2e;font-weight:bold;">Total</div>
<div class="t" style="right:283.7px;text-align:right;top:756.81px;font-size:8.6px;line-height:11.18px;color:#2e2e2e;font-weight:bold;">6,000</div>
<div class="t" style="right:220.8px;text-align:right;top:756.81px;font-size:8.6px;line-height:11.18px;color:#2e2e2e;font-weight:bold;">(2,720)</div>
<div class="t" style="left:1124.8px;width:600px;text-align:center;top:756.81px;font-size:8.6px;line-height:11.18px;color:#2e2e2e;font-weight:bold;">-</div>
<div class="t" style="left:1185px;width:600px;text-align:center;top:756.81px;font-size:8.6px;line-height:11.18px;color:#2e2e2e;font-weight:bold;">-</div>
<svg style="left:0;top:0" width="1600" height="898" viewBox="0 0 1600 898"><rect x="781.6" y="298.6" width="8.6" height="8.6" fill="#fff" stroke="#7a7a7a" stroke-width="1.1"/><rect x="856.1" y="298.6" width="8.6" height="8.6" fill="#fff" stroke="#7a7a7a" stroke-width="1.1"/><path d="M857.9 302.8l1.8 1.9 3.4-3.8" fill="none" stroke="#555" stroke-width="1.1"/><rect x="920.6" y="298.6" width="8.6" height="8.6" fill="#fff" stroke="#7a7a7a" stroke-width="1.1"/><path d="M922.4 302.8l1.8 1.9 3.4-3.8" fill="none" stroke="#555" stroke-width="1.1"/><rect x="968.0" y="298.6" width="8.6" height="8.6" fill="#fff" stroke="#7a7a7a" stroke-width="1.1"/><path d="M969.8 302.8l1.8 1.9 3.4-3.8" fill="none" stroke="#555" stroke-width="1.1"/><rect x="1022.4" y="298.6" width="8.6" height="8.6" fill="#fff" stroke="#7a7a7a" stroke-width="1.1"/><path d="M1024.2 302.8l1.8 1.9 3.4-3.8" fill="none" stroke="#555" stroke-width="1.1"/><rect x="1071.5" y="298.6" width="8.6" height="8.6" fill="#fff" stroke="#7a7a7a" stroke-width="1.1"/><path d="M1073.3000000000002 302.8l1.8 1.9 3.4-3.8" fill="none" stroke="#555" stroke-width="1.1"/><rect x="545" y="437.2" width="577" height="1" fill="#e9e9e9"/><rect x="545.3" y="345.7" width="7" height="91.5" fill="#f6f6f6"/><rect x="554.9" y="395.7" width="7" height="41.5" fill="#f6f6f6"/><rect x="564.5" y="391.5" width="7" height="45.7" fill="#f6f6f6"/><rect x="574.1" y="428.7" width="7" height="8.5" fill="#f6f6f6"/><rect x="547.3" y="347.7" width="3" height="89.5" fill="#d6d6d6"/><rect x="556.9" y="397.7" width="3" height="39.5" fill="#d6d6d6"/><rect x="566.5" y="393.5" width="3" height="43.7" fill="#d6d6d6"/><rect x="576.1" y="430.7" width="3" height="6.5" fill="#d6d6d6"/><rect x="593.35" y="344.5" width="7" height="92.7" fill="#f6f6f6"/><rect x="602.95" y="400.4" width="7" height="36.8" fill="#f6f6f6"/><rect x="612.55" y="385.8" width="7" height="51.4" fill="#f6f6f6"/><rect x="622.15" y="428.7" width="7" height="8.5" fill="#f6f6f6"/><rect x="595.35" y="346.5" width="3" height="90.7" fill="#d6d6d6"/><rect x="604.95" y="402.4" width="3" height="34.8" fill="#d6d6d6"/><rect x="614.55" y="387.8" width="3" height="49.4" fill="#d6d6d6"/><rect x="624.15" y="430.7" width="3" height="6.5" fill="#d6d6d6"/><rect x="641.4" y="343.5" width="7" height="93.7" fill="#f6f6f6"/><rect x="651.0" y="389" width="7" height="48.2" fill="#f6f6f6"/><rect x="660.6" y="396.3" width="7" height="40.9" fill="#f6f6f6"/><rect x="670.2" y="428.7" width="7" height="8.5" fill="#f6f6f6"/><rect x="643.4" y="345.5" width="3" height="91.7" fill="#d6d6d6"/><rect x="653.0" y="391" width="3" height="46.2" fill="#d6d6d6"/><rect x="662.6" y="398.3" width="3" height="38.9" fill="#d6d6d6"/><rect x="672.2" y="430.7" width="3" height="6.5" fill="#d6d6d6"/><rect x="689.45" y="345.1" width="7" height="92.1" fill="#f6f6f6"/><rect x="699.05" y="396.7" width="7" height="40.5" fill="#f6f6f6"/><rect x="708.65" y="390.1" width="7" height="47.1" fill="#f6f6f6"/><rect x="718.25" y="428.7" width="7" height="8.5" fill="#f6f6f6"/><rect x="691.45" y="347.1" width="3" height="90.1" fill="#d6d6d6"/><rect x="701.05" y="398.7" width="3" height="38.5" fill="#d6d6d6"/><rect x="710.65" y="392.1" width="3" height="45.1" fill="#d6d6d6"/><rect x="720.25" y="430.7" width="3" height="6.5" fill="#d6d6d6"/><rect x="737.5" y="347.2" width="7" height="90.0" fill="#f6f6f6"/><rect x="747.1" y="399.8" width="7" height="37.4" fill="#f6f6f6"/><rect x="756.7" y="389" width="7" height="48.2" fill="#f6f6f6"/><rect x="766.3" y="428.7" width="7" height="8.5" fill="#f6f6f6"/><rect x="739.5" y="349.2" width="3" height="88.0" fill="#d6d6d6"/><rect x="749.1" y="401.8" width="3" height="35.4" fill="#d6d6d6"/><rect x="758.7" y="391" width="3" height="46.2" fill="#d6d6d6"/><rect x="768.3" y="430.7" width="3" height="6.5" fill="#d6d6d6"/><rect x="785.55" y="345.1" width="7" height="92.1" fill="#f6f6f6"/><rect x="795.15" y="394.6" width="7" height="42.6" fill="#f6f6f6"/><rect x="804.75" y="392.6" width="7" height="44.6" fill="#f6f6f6"/><rect x="814.35" y="428.7" width="7" height="8.5" fill="#f6f6f6"/><rect x="787.55" y="347.1" width="3" height="90.1" fill="#d6d6d6"/><rect x="797.15" y="396.6" width="3" height="40.6" fill="#d6d6d6"/><rect x="806.75" y="394.6" width="3" height="42.6" fill="#d6d6d6"/><rect x="816.35" y="430.7" width="3" height="6.5" fill="#d6d6d6"/><rect x="833.1" y="348.2" width="8" height="89.0" fill="#e0f5e9"/><rect x="842.7" y="400.1" width="8" height="37.1" fill="#fde3ee"/><rect x="852.3" y="391.9" width="8" height="45.3" fill="#dde8fb"/><rect x="861.9" y="430.7" width="8" height="6.5" fill="#ebebf2"/><rect x="835.5" y="362.6" width="3.2" height="74.6" fill="#3cc07f"/><rect x="845.1" y="403.9" width="3.2" height="33.3" fill="#e5268a"/><rect x="854.7" y="410.5" width="3.2" height="26.7" fill="#3d7ce0"/><rect x="864.3" y="433.1" width="3.2" height="4.1" fill="#6a6e98"/><rect x="881.15" y="349.2" width="8" height="88.0" fill="#f3f3f3"/><rect x="890.75" y="381.2" width="8" height="56.0" fill="#f3f3f3"/><rect x="900.35" y="411" width="8" height="26.2" fill="#f3f3f3"/><rect x="909.95" y="429.6" width="8" height="7.6" fill="#f3f3f3"/><rect x="929.2" y="349.2" width="8" height="88.0" fill="#f3f3f3"/><rect x="938.8" y="397.7" width="8" height="39.5" fill="#f3f3f3"/><rect x="948.4" y="393.5" width="8" height="43.7" fill="#f3f3f3"/><rect x="958.0" y="429.2" width="8" height="8.0" fill="#f3f3f3"/><rect x="977.25" y="347.1" width="8" height="90.1" fill="#f3f3f3"/><rect x="986.85" y="399.7" width="8" height="37.5" fill="#f3f3f3"/><rect x="996.45" y="396.2" width="8" height="41.0" fill="#f3f3f3"/><rect x="1006.05" y="425.5" width="8" height="11.7" fill="#f3f3f3"/><rect x="1025.3" y="343" width="8" height="94.2" fill="#f3f3f3"/><rect x="1034.9" y="399.7" width="8" height="37.5" fill="#f3f3f3"/><rect x="1044.5" y="391.5" width="8" height="45.7" fill="#f3f3f3"/><rect x="1054.1" y="425.5" width="8" height="11.7" fill="#f3f3f3"/><rect x="1073.35" y="342" width="8" height="95.2" fill="#f3f3f3"/><rect x="1082.95" y="390.4" width="8" height="46.8" fill="#f3f3f3"/><rect x="1092.55" y="399.7" width="8" height="37.5" fill="#f3f3f3"/><rect x="1102.15" y="425.5" width="8" height="11.7" fill="#f3f3f3"/><circle cx="550" cy="555.2" r="36.6" fill="none" stroke="#38b07a" stroke-width="8.6" stroke-dasharray="223.245 229.965" stroke-dashoffset="-0.000" transform="rotate(-90 550 555.2)"/><circle cx="550" cy="555.2" r="36.6" fill="none" stroke="#7fd6ae" stroke-width="8.6" stroke-dasharray="4.319 229.965" stroke-dashoffset="-224.445" transform="rotate(-90 550 555.2)"/><circle cx="880" cy="555" r="36.6" fill="none" stroke="#c81f6e" stroke-width="8.6" stroke-dasharray="135.859 229.965" stroke-dashoffset="-0.000" transform="rotate(-90 880 555)"/><circle cx="880" cy="555" r="36.6" fill="none" stroke="#e8318c" stroke-width="8.6" stroke-dasharray="28.465 229.965" stroke-dashoffset="-137.059" transform="rotate(-90 880 555)"/><circle cx="880" cy="555" r="36.6" fill="none" stroke="#f07cb2" stroke-width="8.6" stroke-dasharray="24.096 229.965" stroke-dashoffset="-166.724" transform="rotate(-90 880 555)"/><circle cx="880" cy="555" r="36.6" fill="none" stroke="#f4a4c8" stroke-width="8.6" stroke-dasharray="20.877 229.965" stroke-dashoffset="-192.020" transform="rotate(-90 880 555)"/><circle cx="880" cy="555" r="36.6" fill="none" stroke="#f9d0e2" stroke-width="8.6" stroke-dasharray="13.978 229.965" stroke-dashoffset="-214.097" transform="rotate(-90 880 555)"/><circle cx="880" cy="555" r="36.6" fill="none" stroke="#f4f4f4" stroke-width="8.6" stroke-dasharray="0.300 229.965" stroke-dashoffset="-229.275" transform="rotate(-90 880 555)"/><circle cx="553.7" cy="725" r="36.6" fill="none" stroke="#2e68d0" stroke-width="8.6" stroke-dasharray="103.434 229.965" stroke-dashoffset="-0.000" transform="rotate(-90 553.7 725)"/><circle cx="553.7" cy="725" r="36.6" fill="none" stroke="#4a8ae8" stroke-width="8.6" stroke-dasharray="82.507 229.965" stroke-dashoffset="-104.634" transform="rotate(-90 553.7 725)"/><circle cx="553.7" cy="725" r="36.6" fill="none" stroke="#8ab3ef" stroke-width="8.6" stroke-dasharray="40.424 229.965" stroke-dashoffset="-188.341" transform="rotate(-90 553.7 725)"/><circle cx="880" cy="725" r="36.6" fill="none" stroke="#6b6fa6" stroke-width="8.6" stroke-dasharray="228.765 229.965" stroke-dashoffset="-0.000" transform="rotate(-90 880 725)"/><rect x="1186.7" y="340.32" width="0.8" height="97.58" fill="#f0f0f0"/><rect x="1212.65" y="340.32" width="0.8" height="97.58" fill="#f0f0f0"/><rect x="1238.6" y="340.32" width="0.8" height="97.58" fill="#f0f0f0"/><rect x="1264.55" y="340.32" width="0.8" height="97.58" fill="#f0f0f0"/><rect x="1290.5" y="340.32" width="0.8" height="97.58" fill="#f0f0f0"/><rect x="1316.45" y="340.32" width="0.8" height="97.58" fill="#f0f0f0"/><rect x="1342.4" y="340.32" width="0.8" height="97.58" fill="#f0f0f0"/><rect x="1368.35" y="340.32" width="0.8" height="97.58" fill="#f0f0f0"/><rect x="1394.3" y="340.32" width="0.8" height="97.58" fill="#f0f0f0"/><rect x="1420.25" y="340.32" width="0.8" height="97.58" fill="#f0f0f0"/><rect x="1446.2" y="340.32" width="0.8" height="97.58" fill="#f0f0f0"/><rect x="1472.15" y="340.32" width="0.8" height="97.58" fill="#f0f0f0"/><rect x="1498.1" y="340.32" width="0.8" height="97.58" fill="#f0f0f0"/><rect x="1186.7" y="423.96" width="311.4" height="0.8" fill="#f0f0f0"/><rect x="1186.7" y="410.02" width="311.4" height="0.8" fill="#f0f0f0"/><rect x="1186.7" y="396.08" width="311.4" height="0.8" fill="#f0f0f0"/><rect x="1186.7" y="382.14" width="311.4" height="0.8" fill="#f0f0f0"/><rect x="1186.7" y="368.2" width="311.4" height="0.8" fill="#f0f0f0"/><rect x="1186.7" y="354.26" width="311.4" height="0.8" fill="#f0f0f0"/><rect x="1186.7" y="340.32" width="311.4" height="0.8" fill="#f0f0f0"/><rect x="1186.7" y="437.4" width="311.4" height="1.3" fill="#dedede"/><polyline fill="none" stroke="#dcdcdc" stroke-width="2" stroke-dasharray="2 2.2" points="1199.65,357 1225.6,357.2 1251.55,359.8 1277.5,357.5 1303.45,357.2 1329.4,359.5 1355.35,356.8 1381.3,386.2 1407.25,360.6 1433.2,356.5 1459.15,356 1485.1,356"/><circle cx="1199.65" cy="357" r="3.6" fill="#fff" stroke="#e3e3e3" stroke-width="1.5"/><circle cx="1225.6" cy="357.2" r="3.6" fill="#fff" stroke="#e3e3e3" stroke-width="1.5"/><circle cx="1251.55" cy="359.8" r="3.6" fill="#fff" stroke="#e3e3e3" stroke-width="1.5"/><circle cx="1277.5" cy="357.5" r="3.6" fill="#fff" stroke="#e3e3e3" stroke-width="1.5"/><circle cx="1303.45" cy="357.2" r="3.6" fill="#fff" stroke="#e3e3e3" stroke-width="1.5"/><circle cx="1329.4" cy="359.5" r="3.6" fill="#fff" stroke="#e3e3e3" stroke-width="1.5"/><circle cx="1355.35" cy="356.8" r="3.6" fill="#fff" stroke="#e3e3e3" stroke-width="1.5"/><circle cx="1381.3" cy="386.2" r="3.6" fill="#fff" stroke="#e3e3e3" stroke-width="1.5"/><circle cx="1407.25" cy="360.6" r="3.6" fill="#fff" stroke="#e3e3e3" stroke-width="1.5"/><circle cx="1433.2" cy="356.5" r="3.6" fill="#fff" stroke="#e3e3e3" stroke-width="1.5"/><circle cx="1459.15" cy="356" r="3.6" fill="#fff" stroke="#e3e3e3" stroke-width="1.5"/><circle cx="1485.1" cy="356" r="3.6" fill="#fff" stroke="#e3e3e3" stroke-width="1.5"/><polyline fill="none" stroke="#808080" stroke-width="2.3" points="1199.65,360.2 1225.6,351.5 1251.55,369.2 1277.5,358.2 1303.45,354.5 1329.4,362.2 1355.35,381.8"/><circle cx="1199.65" cy="360.2" r="3.7" fill="#fff" stroke="#808080" stroke-width="1.8"/><circle cx="1225.6" cy="351.5" r="3.7" fill="#fff" stroke="#808080" stroke-width="1.8"/><circle cx="1251.55" cy="369.2" r="3.7" fill="#fff" stroke="#808080" stroke-width="1.8"/><circle cx="1277.5" cy="358.2" r="3.7" fill="#fff" stroke="#808080" stroke-width="1.8"/><circle cx="1303.45" cy="354.5" r="3.7" fill="#fff" stroke="#808080" stroke-width="1.8"/><circle cx="1329.4" cy="362.2" r="3.7" fill="#fff" stroke="#808080" stroke-width="1.8"/><circle cx="1355.35" cy="381.8" r="4.4" fill="#7a7a7a"/></svg>
<div class="t" style="left:1054.4px;width:600px;text-align:center;top:363.87px;font-size:7.9px;line-height:10.27px;color:#7c7c7c;font-weight:bold;">40.7%</div>
<div class="r" style="left:1441px;top:228.4px;width:110.6px;height:205px;border:1px solid #c8c8c8;background:#fff;box-shadow:1px 1px 3px rgba(0,0,0,0.12)"></div>
<div class="r" style="left:1535.6px;top:229.4px;width:17.0px;height:205.0px;background:#f0f0f0;"></div>
<div class="r" style="left:1542.8px;top:246.7px;width:1.8px;height:135.3px;background:#8a8a8a;border-radius:1px;"></div>
<div class="r" style="left:1441.4px;top:263.2px;width:91px;height:15.3px;border:1px solid #99ccf3;background:#cde6fb"></div>
<div class="t" style="left:1443.8px;top:231.56px;font-size:11.3px;line-height:14.69px;color:#3a3a3a;font-weight:normal;">Total Year</div>
<div class="t" style="left:1443.8px;top:248.69px;font-size:11.3px;line-height:14.69px;color:#3a3a3a;font-weight:normal;">YTD</div>
<div class="t" style="left:1443.8px;top:265.81px;font-size:11.3px;line-height:14.69px;color:#3a3a3a;font-weight:normal;">Current Month</div>
<div class="t" style="left:1443.8px;top:282.94px;font-size:11.3px;line-height:14.69px;color:#3a3a3a;font-weight:normal;">January</div>
<div class="t" style="left:1443.8px;top:300.07px;font-size:11.3px;line-height:14.69px;color:#3a3a3a;font-weight:normal;">February</div>
<div class="t" style="left:1443.8px;top:317.2px;font-size:11.3px;line-height:14.69px;color:#3a3a3a;font-weight:normal;">March</div>
<div class="t" style="left:1443.8px;top:334.34px;font-size:11.3px;line-height:14.69px;color:#3a3a3a;font-weight:normal;">April</div>
<div class="t" style="left:1443.8px;top:351.47px;font-size:11.3px;line-height:14.69px;color:#3a3a3a;font-weight:normal;">May</div>
<div class="t" style="left:1443.8px;top:368.6px;font-size:11.3px;line-height:14.69px;color:#3a3a3a;font-weight:normal;">June</div>
<div class="t" style="left:1443.8px;top:385.73px;font-size:11.3px;line-height:14.69px;color:#3a3a3a;font-weight:normal;">July</div>
<div class="t" style="left:1443.8px;top:402.86px;font-size:11.3px;line-height:14.69px;color:#3a3a3a;font-weight:normal;">August</div>
<div class="t" style="left:1443.8px;top:419.99px;font-size:11.3px;line-height:14.69px;color:#3a3a3a;font-weight:normal;">September</div>
<svg style="left:1497px;top:276px" width="13" height="19" viewBox="0 0 13 19">
<path d="M1 1v14l3.3-3.2 2.4 5.5 2.2-1-2.4-5.3H11z" fill="#fff" stroke="#555" stroke-width="0.9" stroke-linejoin="round"/>
</svg>
</body></html>
